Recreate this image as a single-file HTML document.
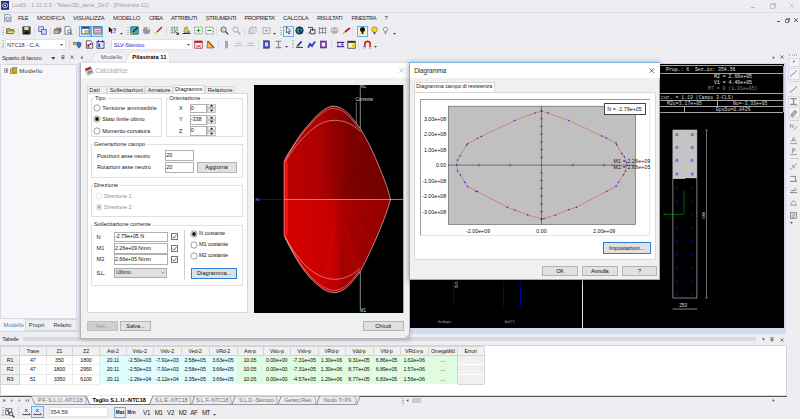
<!DOCTYPE html>
<html lang="it"><head><meta charset="utf-8"><title>Ludi3</title>
<style>
html,body{margin:0;padding:0}
body{width:800px;height:419px;overflow:hidden;background:#eeeef2;position:relative;font-family:"Liberation Sans",sans-serif}
.b{position:absolute;box-sizing:border-box;display:block}
.t{position:absolute;white-space:pre;font-family:"Liberation Sans",sans-serif}
.t.m{font-family:"Liberation Mono",monospace}
</style></head>
<body>
<div class="b" style="left:0.00px;top:0.00px;width:800.00px;height:12.30px;background:#eeeef2;"></div>
<div class="b" style="left:0.00px;top:12.20px;width:800.00px;height:0.80px;background:#dddde8;"></div>
<svg class="b" style="left:1px;top:1.2px" width="8.2" height="8.8" viewBox="0 0 9 10"><rect width="9" height="10" fill="#1b2a78"/><circle cx="4.5" cy="5" r="2.8" fill="none" stroke="#e8e8f4" stroke-width="1"/><circle cx="4.5" cy="5" r="1" fill="#e8e8f4"/></svg>
<span class="t" style="left:12.00px;top:2.21px;font-size:5.9px;line-height:6.79px;color:#a2a2a6;letter-spacing:-0.072px;">Ludi3 - 1.12.0.3 - Telaio3D_lame_DirZ - [Pilastrata 11]</span>
<div class="b" style="left:751.00px;top:7.00px;width:4.00px;height:0.60px;background:#b8b8bc;"></div>
<svg class="b" style="left:770px;top:3px" width="6" height="6" viewBox="0 0 6 6"><path d="M1.5 0.5H5.5V4.5M0.5 1.5H4.5V5.5H0.5Z" fill="none" stroke="#b0b0b4" stroke-width="0.7"/></svg>
<svg class="b" style="left:789px;top:3px" width="5" height="5" viewBox="0 0 5 5"><path d="M0.3 0.3L4.7 4.7M4.7 0.3L0.3 4.7" stroke="#b0b0b4" stroke-width="0.7"/></svg>
<svg class="b" style="left:4.2px;top:14px" width="7.6" height="8.3" viewBox="0 0 8 9.5"><path d="M0.5 0.5H5.5L7.5 2.5V9H0.5Z" fill="#fff" stroke="#444" stroke-width="0.7"/><circle cx="4" cy="5.5" r="2" fill="none" stroke="#3a4aa8" stroke-width="0.9"/></svg>
<span class="t" style="left:18.00px;top:15.27px;font-size:5.8px;line-height:6.67px;color:#2a2a2e;letter-spacing:-0.562px;">FILE</span>
<span class="t" style="left:37.00px;top:15.27px;font-size:5.8px;line-height:6.67px;color:#2a2a2e;letter-spacing:-0.044px;">MODIFICA</span>
<span class="t" style="left:73.00px;top:15.27px;font-size:5.8px;line-height:6.67px;color:#2a2a2e;letter-spacing:-0.170px;">VISUALIZZA</span>
<span class="t" style="left:113.00px;top:15.27px;font-size:5.8px;line-height:6.67px;color:#2a2a2e;letter-spacing:-0.195px;">MODELLO</span>
<span class="t" style="left:149.00px;top:15.27px;font-size:5.8px;line-height:6.67px;color:#2a2a2e;letter-spacing:-0.654px;">CREA</span>
<span class="t" style="left:171.00px;top:15.27px;font-size:5.8px;line-height:6.67px;color:#2a2a2e;letter-spacing:-0.393px;">ATTRIBUTI</span>
<span class="t" style="left:205.80px;top:15.27px;font-size:5.8px;line-height:6.67px;color:#2a2a2e;letter-spacing:-0.404px;">STRUMENTI</span>
<span class="t" style="left:244.50px;top:15.27px;font-size:5.8px;line-height:6.67px;color:#2a2a2e;letter-spacing:-0.370px;">PROPRIETA'</span>
<span class="t" style="left:283.00px;top:15.27px;font-size:5.8px;line-height:6.67px;color:#2a2a2e;letter-spacing:-0.225px;">CALCOLA</span>
<span class="t" style="left:317.00px;top:15.27px;font-size:5.8px;line-height:6.67px;color:#2a2a2e;letter-spacing:-0.340px;">RISULTATI</span>
<span class="t" style="left:351.50px;top:15.27px;font-size:5.8px;line-height:6.67px;color:#2a2a2e;letter-spacing:-0.523px;">FINESTRA</span>
<span class="t" style="left:384.50px;top:15.27px;font-size:5.8px;line-height:6.67px;color:#2a2a2e;">?</span>
<div class="b" style="left:776.50px;top:21.00px;width:3.00px;height:0.80px;background:#555;"></div>
<svg class="b" style="left:785px;top:17.5px" width="5" height="5" viewBox="0 0 5 5"><path d="M1.5 0.5H4.5V3.5M0.5 1.5H3.5V4.5H0.5Z" fill="none" stroke="#444" stroke-width="0.7"/></svg>
<svg class="b" style="left:794px;top:17.8px" width="4.4" height="4.4" viewBox="0 0 5 5"><path d="M0.3 0.3L4.7 4.7M4.7 0.3L0.3 4.7" stroke="#333" stroke-width="0.9"/></svg>
<div class="b" style="left:1.5px;top:27px;width:2px;height:9px;background:repeating-linear-gradient(#b8b8c2 0 0.8px,transparent 0.8px 1.7px)"></div>
<svg class="b" style="left:5.5px;top:26.4px" width="9" height="9" viewBox="0 0 9 9"><path d="M0.5 2.5H3.5L4 3.5H7.5V7.5H0.5Z" fill="#c8b63a" stroke="#4a4210" stroke-width="0.6"/><path d="M1.8 5H8.6L7.4 7.6H0.6Z" fill="#f0e27a" stroke="#4a4210" stroke-width="0.5"/></svg>
<svg class="b" style="left:21.5px;top:26.4px" width="9" height="9" viewBox="0 0 9 9"><rect x="0.8" y="0.8" width="7.4" height="7.4" fill="#3e3e10" stroke="#222" stroke-width="0.5"/><rect x="2.2" y="1" width="4.4" height="3" fill="#d8d8d0"/><rect x="2.6" y="5.6" width="3.6" height="2.4" fill="#111"/></svg>
<svg class="b" style="left:37.5px;top:26.4px" width="9" height="9" viewBox="0 0 9 9"><rect x="0.8" y="0.8" width="4.6" height="4.8" fill="#dfe6ff" stroke="#3246a0" stroke-width="0.7"/><rect x="3.6" y="3.4" width="4.6" height="4.8" fill="#c8d4ff" stroke="#3246a0" stroke-width="0.7"/></svg>
<svg class="b" style="left:52.5px;top:26.4px" width="9" height="9" viewBox="0 0 9 9"><path d="M1 4L3.5 2H8L6 4Z" fill="#ddd" stroke="#333" stroke-width="0.5"/><rect x="1" y="4" width="5.2" height="3.4" fill="#bbb" stroke="#333" stroke-width="0.5"/><path d="M6.2 4L8 2V5.4L6.2 7.4Z" fill="#888" stroke="#333" stroke-width="0.5"/><rect x="3" y="2.6" width="3" height="1" fill="#d33"/></svg>
<svg class="b" style="left:63.5px;top:26.4px" width="9" height="9" viewBox="0 0 9 9"><path d="M1 0.6H5.2L7 2.4V8.2H1Z" fill="#fff" stroke="#333" stroke-width="0.6"/><circle cx="5" cy="5.4" r="1.7" fill="#cfe" stroke="#245" stroke-width="0.6"/><path d="M6.2 6.6L8.2 8.6" stroke="#245" stroke-width="0.9"/></svg>
<div class="b" style="left:17.75px;top:26.50px;width:0.50px;height:9.50px;background:#dadae2;"></div>
<div class="b" style="left:33.75px;top:26.50px;width:0.50px;height:9.50px;background:#dadae2;"></div>
<div class="b" style="left:49.75px;top:26.50px;width:0.50px;height:9.50px;background:#dadae2;"></div>
<div class="b" style="left:75.75px;top:26.50px;width:0.50px;height:9.50px;background:#dadae2;"></div>
<div class="b" style="left:79.20px;top:25.80px;width:11.80px;height:11.00px;background:#d8ecfa;border:0.6px solid #6ab0e0;"></div>
<div class="b" style="left:91.20px;top:25.80px;width:11.80px;height:11.00px;background:#d8ecfa;border:0.6px solid #6ab0e0;"></div>
<svg class="b" style="left:80.5px;top:26.4px" width="9" height="9" viewBox="0 0 9 9"><rect x="0.8" y="1" width="7.4" height="7" fill="#fff" stroke="#234" stroke-width="0.7"/><rect x="0.8" y="1" width="7.4" height="1.8" fill="#234a8a"/><rect x="4" y="4.4" width="3.4" height="3" fill="#e8d44a" stroke="#553" stroke-width="0.4"/></svg>
<svg class="b" style="left:92.5px;top:26.4px" width="9" height="9" viewBox="0 0 9 9"><rect x="0.8" y="1" width="7.4" height="7" fill="#e8ecf8" stroke="#234" stroke-width="0.7"/><rect x="0.8" y="1" width="7.4" height="1.8" fill="#7a8ab8"/><path d="M1.6 4.4H7.4M1.6 6.2H7.4" stroke="#c33" stroke-width="0.7"/></svg>
<svg class="b" style="left:108.0px;top:26.4px" width="9" height="9" viewBox="0 0 9 9"><path d="M0.8 0.8V6.4L2.4 5L3.6 7.6L4.6 7.1L3.4 4.6H5.2Z" fill="#111"/><text x="4.6" y="6.6" font-size="6.5" font-weight="700" fill="#223a9a" font-family="Liberation Sans,sans-serif">?</text></svg>
<svg class="b" style="left:119.5px;top:33.2px" width="3" height="2" viewBox="0 0 3 2"><path d="M0 0H3L1.5 1.8Z" fill="#444"/></svg>
<div class="b" style="left:126.5px;top:27px;width:2px;height:9px;background:repeating-linear-gradient(#b8b8c2 0 0.8px,transparent 0.8px 1.7px)"></div>
<svg class="b" style="left:130.0px;top:26.4px" width="9" height="9" viewBox="0 0 9 9"><rect x="0.8" y="0.8" width="7.4" height="7.4" fill="#2ab8b0" stroke="#145" stroke-width="0.6"/><path d="M1.4 7.6L7.8 1.2" stroke="#223" stroke-width="1.3"/><path d="M1.2 7.8L2.8 6.2" stroke="#e6c020" stroke-width="1.2"/></svg>
<svg class="b" style="left:142.0px;top:26.4px" width="9" height="9" viewBox="0 0 9 9"><circle cx="4.5" cy="4.7" r="3.6" fill="#9a9a9a"/><path d="M5 1.4L8 2.6L5.6 4Z" fill="#eeeef2"/></svg>
<svg class="b" style="left:153.5px;top:26.4px" width="9" height="9" viewBox="0 0 9 9"><path d="M1 8L3 6" stroke="#e8d020" stroke-width="1.5"/><path d="M3 6L8 1" stroke="#c02020" stroke-width="1.4"/></svg>
<div class="b" style="left:165.75px;top:26.50px;width:0.50px;height:9.50px;background:#dadae2;"></div>
<svg class="b" style="left:169.5px;top:26.4px" width="9" height="9" viewBox="0 0 9 9"><path d="M0.8 1.6H8.2M0.8 4H8.2M0.8 6.4H6M2.2 0.6V7.6M4.6 0.6V7.6M7 0.6V5" stroke="#253" stroke-width="0.6" stroke-dasharray="1 0.6"/><path d="M5.4 5.4L8.4 8.4M8.4 6.4V8.4H6.4" stroke="#111" stroke-width="0.8" fill="none"/></svg>
<svg class="b" style="left:182.0px;top:26.4px" width="9" height="9" viewBox="0 0 9 9"><rect x="0.6" y="7" width="7.8" height="1" fill="#222"/><path d="M3.2 1.2H5.4V3.4L7.4 5L6 6.8H2.8L1.8 5Z" fill="#e2cc3a" stroke="#554" stroke-width="0.5"/><circle cx="6.6" cy="6.2" r="1.3" fill="#5a8"/></svg>
<svg class="b" style="left:193.5px;top:26.4px" width="9" height="9" viewBox="0 0 9 9"><rect x="0.8" y="1.2" width="7.4" height="6.6" fill="#fff" stroke="#333" stroke-width="0.6" stroke-dasharray="1 0.6"/><path d="M2.4 4.5H6.6M4.5 2.6V6.4" stroke="#1a9a2a" stroke-width="1.2"/></svg>
<svg class="b" style="left:205.0px;top:26.4px" width="9" height="9" viewBox="0 0 9 9"><rect x="0.8" y="1.2" width="7.4" height="6.6" fill="#fff" stroke="#333" stroke-width="0.6" stroke-dasharray="1 0.6"/><path d="M2.4 4.5H6.6" stroke="#1a9a2a" stroke-width="1.2"/></svg>
<div class="b" style="left:216.25px;top:26.50px;width:0.50px;height:9.50px;background:#dadae2;"></div>
<svg class="b" style="left:220.0px;top:26.4px" width="9" height="9" viewBox="0 0 9 9"><circle cx="3.6" cy="3.6" r="2.6" fill="#e8f4ee" stroke="#333" stroke-width="0.8"/><path d="M5.6 5.6L8.4 8.4" stroke="#333" stroke-width="1.2"/><path d="M2.4 3.6H4.8" stroke="#c80" stroke-width="0.7"/></svg>
<svg class="b" style="left:232.0px;top:26.4px" width="9" height="9" viewBox="0 0 9 9"><circle cx="3.6" cy="3.6" r="2.6" fill="none" stroke="#999" stroke-width="0.8"/><path d="M5.6 5.6L8.4 8.4" stroke="#999" stroke-width="1.1"/></svg>
<div class="b" style="left:244.25px;top:26.50px;width:0.50px;height:9.50px;background:#dadae2;"></div>
<svg class="b" style="left:248.0px;top:26.4px" width="9" height="9" viewBox="0 0 9 9"><path d="M1 3L3 1.2H8V5.6L6 7.6H1Z" fill="none" stroke="#a0a0a4" stroke-width="0.8"/><circle cx="4" cy="4.6" r="1.8" fill="none" stroke="#a0a0a4" stroke-width="0.7"/></svg>
<svg class="b" style="left:261.5px;top:26.4px" width="9" height="9" viewBox="0 0 9 9"><rect x="1" y="1.8" width="7" height="5.6" fill="none" stroke="#a0a0a4" stroke-width="0.8"/><circle cx="4.5" cy="4.6" r="1.2" fill="#a0a0a4"/></svg>
<svg class="b" style="left:273.0px;top:33.2px" width="3" height="2" viewBox="0 0 3 2"><path d="M0 0H3L1.5 1.8Z" fill="#444"/></svg>
<div class="b" style="left:279.5px;top:27px;width:2px;height:9px;background:repeating-linear-gradient(#b8b8c2 0 0.8px,transparent 0.8px 1.7px)"></div>
<div class="b" style="left:282.80px;top:25.80px;width:10.80px;height:11.00px;background:#e4f0fa;border:0.6px solid #6ab0e0;"></div>
<svg class="b" style="left:283.8px;top:26.4px" width="9" height="9" viewBox="0 0 9 9"><path d="M2.4 0.8V7L3.8 5.6L4.8 8L5.8 7.6L4.8 5.2H6.6Z" fill="#fff" stroke="#111" stroke-width="0.6"/></svg>
<svg class="b" style="left:295.0px;top:26.4px" width="9" height="9" viewBox="0 0 9 9"><circle cx="4.5" cy="4.5" r="3.8" fill="#1a3a9a" stroke="#112" stroke-width="0.5"/><path d="M2 2.6C3.4 1.4 4.6 2.6 4 4C3.4 5.4 4.6 6 3.8 7.4C2.4 7 1.2 5 2 2.6Z" fill="#2aa83a"/><path d="M5.6 2.2L7.4 3.4L6.8 5.6L5.6 4.6Z" fill="#2aa83a"/></svg>
<svg class="b" style="left:306.5px;top:26.4px" width="9" height="9" viewBox="0 0 9 9"><path d="M1 1.4H5.6V5M3.4 3.6H8V7.8H3.4Z" fill="none" stroke="#334" stroke-width="0.9"/><path d="M1.2 7.6L3.4 5.2" stroke="#334" stroke-width="0.8"/></svg>
<svg class="b" style="left:318.2px;top:26.4px" width="9" height="9" viewBox="0 0 9 9"><path d="M1.4 1V8M4.5 1V8M7.6 1V8M0.8 2.4H8.2M0.8 6.6H8.2" stroke="#777" stroke-width="0.8"/></svg>
<svg class="b" style="left:330.0px;top:26.4px" width="9" height="9" viewBox="0 0 9 9"><ellipse cx="4.5" cy="4.5" rx="3.8" ry="3.2" fill="#b0b0b2"/><circle cx="3" cy="4" r="0.9" fill="#eee"/><circle cx="6" cy="4" r="0.9" fill="#eee"/></svg>
<svg class="b" style="left:342.0px;top:26.4px" width="9" height="9" viewBox="0 0 9 9"><path d="M1 7.6L3 6" stroke="#d8c030" stroke-width="1.5"/><path d="M3 6L8 1.8" stroke="#b81818" stroke-width="1.7"/></svg>
<div class="b" style="left:352.25px;top:26.50px;width:0.50px;height:9.50px;background:#dadae2;"></div>
<div class="b" style="left:356.60px;top:25.80px;width:11.00px;height:11.00px;background:#f4f0c8;border:0.6px solid #6ab0e0;"></div>
<svg class="b" style="left:357.5px;top:26.4px" width="9" height="9" viewBox="0 0 9 9"><circle cx="4.5" cy="3.4" r="2.5" fill="#111"/><rect x="3.6" y="5.4" width="1.8" height="2.6" fill="#222"/></svg>
<svg class="b" style="left:369.5px;top:26.4px" width="9" height="9" viewBox="0 0 9 9"><circle cx="4.5" cy="3.6" r="2.8" fill="#f2e020" stroke="#554" stroke-width="0.5"/><rect x="3.6" y="6" width="1.8" height="2.2" fill="#555"/></svg>
<svg class="b" style="left:381.0px;top:26.4px" width="9" height="9" viewBox="0 0 9 9"><circle cx="4.5" cy="3.4" r="2.2" fill="#f4f4f4" stroke="#777" stroke-width="0.7"/><rect x="3.7" y="5.6" width="1.6" height="2.4" fill="#888"/></svg>
<svg class="b" style="left:392.5px;top:33.2px" width="3" height="2" viewBox="0 0 3 2"><path d="M0 0H3L1.5 1.8Z" fill="#444"/></svg>
<div class="b" style="left:1.5px;top:40px;width:2px;height:9px;background:repeating-linear-gradient(#b8b8c2 0 0.8px,transparent 0.8px 1.7px)"></div>
<div class="b" style="left:5.00px;top:39.30px;width:60.50px;height:10.40px;background:#fff;border:0.5px solid #e0e0e6;"></div>
<span class="t" style="left:7.00px;top:41.68px;font-size:5.6px;line-height:6.44px;color:#333;letter-spacing:-0.009px;">NTC18 - C.A.</span>
<svg class="b" style="left:59.8px;top:43.8px" width="3" height="2" viewBox="0 0 3 2"><path d="M0 0H3L1.5 1.8Z" fill="#444"/></svg>
<div class="b" style="left:69.25px;top:39.50px;width:0.50px;height:10.00px;background:#dadae2;"></div>
<svg class="b" style="left:73.0px;top:39.8px" width="9" height="9" viewBox="0 0 9 9"><rect x="0.6" y="2.4" width="5" height="2.2" fill="#d8c020" stroke="#443" stroke-width="0.5"/><path d="M5 2L8 3L7.6 6.4L5.6 8L4.2 5.6Z" fill="#2a7ad8" stroke="#124" stroke-width="0.5"/></svg>
<svg class="b" style="left:84.5px;top:39.8px" width="9" height="9" viewBox="0 0 9 9"><path d="M1.4 0.8H5.6L7.6 2.6V8.2H1.4Z" fill="#fff" stroke="#222" stroke-width="0.7"/><rect x="2.4" y="4" width="2.2" height="3.4" fill="#c22"/><rect x="5" y="3" width="1.6" height="2" fill="#24a"/></svg>
<svg class="b" style="left:95.5px;top:39.8px" width="9" height="9" viewBox="0 0 9 9"><rect x="1" y="1.4" width="7" height="6.8" fill="#dfe8ff" stroke="#124" stroke-width="0.7"/><rect x="2" y="0.4" width="1" height="2" fill="#124"/><rect x="6" y="0.4" width="1" height="2" fill="#124"/><rect x="2.2" y="3.6" width="2" height="3.6" fill="#2a58c8"/></svg>
<div class="b" style="left:110.80px;top:39.30px;width:82.20px;height:10.40px;background:#fff;border:0.5px solid #e0e0e6;"></div>
<span class="t" style="left:113.80px;top:41.68px;font-size:5.6px;line-height:6.44px;color:#2222c8;letter-spacing:-0.075px;">SLV-Sismico</span>
<svg class="b" style="left:187.3px;top:43.8px" width="3" height="2" viewBox="0 0 3 2"><path d="M0 0H3L1.5 1.8Z" fill="#444"/></svg>
<svg class="b" style="left:194.0px;top:39.8px" width="9" height="9" viewBox="0 0 9 9"><rect x="0.8" y="1" width="7.4" height="7.2" fill="#fff" stroke="#822" stroke-width="0.7"/><rect x="0.8" y="1" width="7.4" height="2" fill="#c22"/><path d="M2 5L7 7.4M7 5L2 7.4" stroke="#c22" stroke-width="0.7"/></svg>
<svg class="b" style="left:205.5px;top:39.8px" width="9" height="9" viewBox="0 0 9 9"><path d="M1 8L1.6 1L7.6 8Z" fill="#e8c828" stroke="#432" stroke-width="0.5"/><path d="M2 1L8 7.6" stroke="#b22" stroke-width="1.1"/></svg>
<div class="b" style="left:217.75px;top:39.50px;width:0.50px;height:10.00px;background:#dadae2;"></div>
<svg class="b" style="left:222.0px;top:39.8px" width="9" height="9" viewBox="0 0 9 9"><rect x="3" y="0.8" width="3" height="7.6" fill="#a8a8aa"/></svg>
<svg class="b" style="left:234.0px;top:39.8px" width="9" height="9" viewBox="0 0 9 9"><path d="M0.8 5.6H8.2M1.6 3.4H6.6" stroke="#b4b4b8" stroke-width="0.8"/><path d="M5.4 1.8L7.4 3.4" stroke="#b4b4b8" stroke-width="0.7"/></svg>
<svg class="b" style="left:246.0px;top:39.8px" width="9" height="9" viewBox="0 0 9 9"><path d="M0.8 5.6H8.2M1.6 3.4H6.6" stroke="#b4b4b8" stroke-width="0.8"/><path d="M5.4 1.8L7.4 3.4" stroke="#b4b4b8" stroke-width="0.7"/></svg>
<div class="b" style="left:257.75px;top:39.50px;width:0.50px;height:10.00px;background:#dadae2;"></div>
<svg class="b" style="left:261.5px;top:39.8px" width="9" height="9" viewBox="0 0 9 9"><rect x="1.6" y="0.8" width="5.8" height="7.4" fill="#3a48b8" stroke="#223" stroke-width="0.5"/><rect x="3" y="2.4" width="3" height="4" fill="#d8d8f8"/></svg>
<svg class="b" style="left:274.0px;top:39.8px" width="9" height="9" viewBox="0 0 9 9"><path d="M1.6 1.4H7.4M4.5 1.4V7.6M1.6 7.6H7.4" stroke="#8a8a8e" stroke-width="1.1"/></svg>
<svg class="b" style="left:285.0px;top:46.2px" width="3" height="2" viewBox="0 0 3 2"><path d="M0 0H3L1.5 1.8Z" fill="#444"/></svg>
<div class="b" style="left:291.5px;top:40px;width:2px;height:9px;background:repeating-linear-gradient(#b8b8c2 0 0.8px,transparent 0.8px 1.7px)"></div>
<svg class="b" style="left:295.0px;top:39.8px" width="9" height="9" viewBox="0 0 9 9"><path d="M1 7.4H8" stroke="#222" stroke-width="0.9"/><path d="M2 6.6L6.6 1.4" stroke="#2a3ab8" stroke-width="1.8"/><path d="M1.4 7.2L2.8 5.6" stroke="#d8b020" stroke-width="1.3"/></svg>
<svg class="b" style="left:306.5px;top:39.8px" width="9" height="9" viewBox="0 0 9 9"><path d="M1 7.6L3 4L5 6L8 1.4" stroke="#2a3ac8" stroke-width="1.8" fill="none"/></svg>
<svg class="b" style="left:318.5px;top:39.8px" width="9" height="9" viewBox="0 0 9 9"><rect x="1.4" y="1" width="6.2" height="7" fill="#8a3ac8" stroke="#324" stroke-width="0.5"/><rect x="2.8" y="2.6" width="3.4" height="3.8" fill="#f4eaff"/></svg>
<div class="b" style="left:331.25px;top:39.50px;width:0.50px;height:10.00px;background:#dadae2;"></div>
<svg class="b" style="left:335.5px;top:39.8px" width="9" height="9" viewBox="0 0 9 9"><path d="M0.8 2.4H8.2M0.8 6.6H8.2" stroke="#2838c8" stroke-width="1.1"/><path d="M2 2.4V6.6" stroke="#c22" stroke-width="1"/><rect x="5.4" y="3.4" width="2" height="2.2" fill="#c22"/></svg>
<svg class="b" style="left:347.0px;top:39.8px" width="9" height="9" viewBox="0 0 9 9"><rect x="0.8" y="1.2" width="7.4" height="7" fill="#f8f4d0" stroke="#222" stroke-width="0.7"/><rect x="0.8" y="1.2" width="7.4" height="1.6" fill="#222"/><rect x="5" y="4" width="2.6" height="3.2" fill="#e8d020"/></svg>
<div class="b" style="left:358.25px;top:39.50px;width:0.50px;height:10.00px;background:#dadae2;"></div>
<svg class="b" style="left:362.5px;top:39.8px" width="9" height="9" viewBox="0 0 9 9"><path d="M1.8 7.8V4C1.8 0.4 7.2 0.4 7.2 4V7.8" fill="none" stroke="#d82020" stroke-width="1.7"/><rect x="0.9" y="6.6" width="1.9" height="1.6" fill="#eee" stroke="#555" stroke-width="0.3"/><rect x="6.2" y="6.6" width="1.9" height="1.6" fill="#eee" stroke="#555" stroke-width="0.3"/></svg>
<svg class="b" style="left:374.0px;top:46.2px" width="3" height="2" viewBox="0 0 3 2"><path d="M0 0H3L1.5 1.8Z" fill="#444"/></svg>
<span class="t" style="left:1.90px;top:53.99px;font-size:6.1px;line-height:7.01px;color:#3a3a3e;letter-spacing:-0.232px;">Spazio di lavoro</span>
<svg class="b" style="left:50.60px;top:55.60px" width="4.4" height="4.4" viewBox="0 0 3 3"><path d="M0 0.6H3L1.5 2.6Z" fill="#444"/></svg>
<svg class="b" style="left:60.50px;top:54.80px" width="4" height="5" viewBox="0 0 4 5"><path d="M1 0.4H3V2.8H1ZM0.3 2.9H3.7M2 2.9V4.9" fill="none" stroke="#444" stroke-width="0.6"/></svg>
<svg class="b" style="left:69.90px;top:55.40px" width="4.2" height="4.2" viewBox="0 0 5 5"><path d="M0.4 0.4L4.6 4.6M4.6 0.4L0.4 4.6" stroke="#444" stroke-width="0.8"/></svg>
<div class="b" style="left:0.00px;top:64.00px;width:76.80px;height:255.40px;background:#f7f7fa;border:0.5px solid #dadae6;"></div>
<div class="b" style="left:3.60px;top:68.20px;width:4.80px;height:4.80px;background:#fff;border:0.5px solid #b0b0b8;"></div>
<div class="b" style="left:4.80px;top:70.35px;width:2.40px;height:0.50px;background:#777;"></div>
<div class="b" style="left:5.75px;top:69.40px;width:0.50px;height:2.40px;background:#777;"></div>
<svg class="b" style="left:9.6px;top:66.6px" width="7.6" height="7.6" viewBox="0 0 8 8"><rect x="0.6" y="2" width="4.6" height="5.4" fill="#e0c828" stroke="#554" stroke-width="0.5"/><rect x="3" y="0.8" width="4.4" height="5.6" fill="#c8a818" stroke="#554" stroke-width="0.5"/></svg>
<span class="t" style="left:19.30px;top:66.89px;font-size:6.1px;line-height:7.01px;color:#333;letter-spacing:0.305px;">Modello</span>
<div class="b" style="left:0.00px;top:319.00px;width:24.80px;height:12.00px;background:#f7f7fa;"></div>
<div class="b" style="left:24.80px;top:319.20px;width:52.00px;height:11.80px;background:#eeeef2;border:0.5px solid #d8d8e4;"></div>
<div class="b" style="left:0.00px;top:330.80px;width:77.50px;height:1.60px;background:#d0d4e6;"></div>
<span class="t" style="left:3.60px;top:322.18px;font-size:5.6px;line-height:6.44px;color:#3a78b8;letter-spacing:0.113px;">Modello</span>
<span class="t" style="left:28.80px;top:322.12px;font-size:5.7px;line-height:6.55px;color:#333;letter-spacing:0.049px;">Propri</span>
<span class="t" style="left:53.50px;top:322.12px;font-size:5.7px;line-height:6.55px;color:#333;letter-spacing:-0.187px;">Relazio</span>
<svg class="b" style="left:80.40px;top:55.70px" width="3.2" height="3.2" viewBox="0 0 3 3"><path d="M2.4 0L2.4 3L0.4 1.5Z" fill="#555"/></svg>
<svg class="b" style="left:88px;top:51px" width="90" height="12.5" viewBox="0 0 90 12.5"><path d="M1 12.5L8 1.5H36L41 12.5Z" fill="#f4f4f8" stroke="#d0d0da" stroke-width="0.5"/><path d="M36.5 12.5L43 1H81.5V12.5Z" fill="#fff" stroke="#d0d0da" stroke-width="0.5"/></svg>
<span class="t" style="left:101.00px;top:53.96px;font-size:5.8px;line-height:6.67px;color:#555;letter-spacing:0.170px;">Modello</span>
<span class="t" style="left:132.30px;top:53.96px;font-size:5.8px;line-height:6.67px;color:#000;font-weight:700;letter-spacing:0.026px;">Pilastrata 11</span>
<svg class="b" style="left:771.60px;top:55.60px" width="3.4" height="3.4" viewBox="0 0 3 3"><path d="M0.6 0L0.6 3L2.6 1.5Z" fill="#777"/></svg>
<svg class="b" style="left:779.50px;top:55.30px" width="4" height="4" viewBox="0 0 5 5"><path d="M0.4 0.4L4.6 4.6M4.6 0.4L0.4 4.6" stroke="#444" stroke-width="0.8"/></svg>
<div class="b" style="left:77.50px;top:62.80px;width:708.70px;height:271.20px;background:#d2dcf0;"></div>
<div class="b" style="left:77.50px;top:63.00px;width:2.70px;height:271.00px;background:#dde2f1;"></div>
<div class="b" style="left:80.00px;top:63.80px;width:704.20px;height:264.20px;background:#000;"></div>
<div class="b" style="left:582.00px;top:63.80px;width:1.40px;height:264.20px;background:#e8e8e8;"></div>
<div class="b" style="left:453.32px;top:281.00px;width:0.56px;height:26.00px;background:#00008c;"></div>
<div class="b" style="left:502.72px;top:281.00px;width:0.56px;height:26.00px;background:#00008c;"></div>
<div class="b" style="left:520.42px;top:281.00px;width:0.56px;height:26.00px;background:#00008c;"></div>
<span class="t" style="left:438.00px;top:320.50px;font-size:2.6px;line-height:2.99px;color:#aaa;">Hor Angolo</span>
<span class="t" style="left:505.00px;top:320.50px;font-size:2.6px;line-height:2.99px;color:#aaa;">A=0(Y?)</span>
<svg class="b" style="left:454px;top:281px" width="5" height="8" viewBox="0 0 5 8"><circle cx="2.4" cy="2" r="1.2" fill="none" stroke="#ddd" stroke-width="0.5"/><text x="0.4" y="7" font-size="2.8" fill="#ccc" font-family="Liberation Sans,sans-serif">M1</text></svg>
<div class="b" style="left:655.00px;top:65.45px;width:128.30px;height:0.70px;background:#a8a8a8;"></div>
<div class="b" style="left:655.00px;top:72.95px;width:128.30px;height:0.70px;background:#a8a8a8;"></div>
<div class="b" style="left:655.00px;top:92.65px;width:128.30px;height:0.70px;background:#a8a8a8;"></div>
<div class="b" style="left:655.00px;top:99.65px;width:128.30px;height:0.70px;background:#a8a8a8;"></div>
<div class="b" style="left:655.00px;top:106.15px;width:128.30px;height:0.70px;background:#a8a8a8;"></div>
<div class="b" style="left:655.00px;top:111.95px;width:128.30px;height:0.70px;background:#a8a8a8;"></div>
<div class="b" style="left:782.95px;top:65.80px;width:0.70px;height:46.50px;background:#a8a8a8;"></div>
<div class="b" style="left:717.15px;top:100.00px;width:0.70px;height:6.50px;background:#a8a8a8;"></div>
<div class="b" style="left:684.05px;top:106.50px;width:0.70px;height:5.80px;background:#a8a8a8;"></div>
<span class="t m" style="left:666.00px;top:66.84px;font-size:4.8px;line-height:5.52px;color:#e0e0e0;letter-spacing:0.015px;">Prop.: 6  Sez.in: 354.56</span>
<span class="t m" style="left:714.00px;top:74.34px;font-size:4.8px;line-height:5.52px;color:#e8e8e8;letter-spacing:0.043px;">M2 = 2.66e+05</span>
<span class="t m" style="left:714.00px;top:80.34px;font-size:4.8px;line-height:5.52px;color:#e8e8e8;letter-spacing:0.043px;">V1 = 4.46e+05</span>
<span class="t m" style="left:708.00px;top:86.34px;font-size:4.8px;line-height:5.52px;color:#8a8a8a;letter-spacing:0.031px;">MT = 0 (1.31e+05)</span>
<span class="t m" style="left:661.00px;top:94.64px;font-size:4.8px;line-height:5.52px;color:#d8d8d8;letter-spacing:0.020px;">cur. = 1.19 (Campo 3-CLS)</span>
<span class="t m" style="left:667.00px;top:100.54px;font-size:4.8px;line-height:5.52px;color:#d8d8d8;letter-spacing:0.036px;">M2u=3.17e+05</span>
<span class="t m" style="left:733.00px;top:100.54px;font-size:4.8px;line-height:5.52px;color:#d8d8d8;letter-spacing:-0.005px;">Nu=-3.33e+05</span>
<span class="t m" style="left:716.00px;top:106.74px;font-size:4.8px;line-height:5.52px;color:#d8d8d8;letter-spacing:-0.005px;">EpsSu=0.842%</span>
<svg class="b" style="left:655px;top:120px" width="125" height="200" viewBox="655 120 125 200"><rect x="672.9" y="130" width="24" height="168" fill="none" stroke="#d0d0d0" stroke-width="0.6"/><rect x="672.9" y="130" width="24" height="48.2" fill="#c4c4c4"/><path d="M672.9 178.3H685" stroke="#fff" stroke-width="0.8"/><circle cx="676.9" cy="134.7" r="1.3" fill="#8a8ae0" stroke="#4a4ad0" stroke-width="0.5"/><circle cx="692.2" cy="134.7" r="1.3" fill="#8a8ae0" stroke="#4a4ad0" stroke-width="0.5"/><circle cx="676.9" cy="147.5" r="1.3" fill="#8a8ae0" stroke="#4a4ad0" stroke-width="0.5"/><circle cx="692.2" cy="147.5" r="1.3" fill="#8a8ae0" stroke="#4a4ad0" stroke-width="0.5"/><circle cx="676.9" cy="160.4" r="1.3" fill="#8a8ae0" stroke="#4a4ad0" stroke-width="0.5"/><circle cx="692.2" cy="160.4" r="1.3" fill="#8a8ae0" stroke="#4a4ad0" stroke-width="0.5"/><circle cx="676.9" cy="174" r="1.3" fill="#8a8ae0" stroke="#4a4ad0" stroke-width="0.5"/><circle cx="692.2" cy="174" r="1.3" fill="#8a8ae0" stroke="#4a4ad0" stroke-width="0.5"/><circle cx="676.9" cy="188.6" r="1.1" fill="none" stroke="#0808b8" stroke-width="0.7"/><circle cx="692.2" cy="188.6" r="1.1" fill="none" stroke="#0808b8" stroke-width="0.7"/><circle cx="676.9" cy="201" r="1.1" fill="none" stroke="#0808b8" stroke-width="0.7"/><circle cx="692.2" cy="201" r="1.1" fill="none" stroke="#0808b8" stroke-width="0.7"/><circle cx="676.9" cy="214.3" r="1.1" fill="none" stroke="#0808b8" stroke-width="0.7"/><circle cx="692.2" cy="214.3" r="1.1" fill="none" stroke="#0808b8" stroke-width="0.7"/><circle cx="676.9" cy="228" r="1.1" fill="none" stroke="#0808b8" stroke-width="0.7"/><circle cx="692.2" cy="228" r="1.1" fill="none" stroke="#0808b8" stroke-width="0.7"/><circle cx="676.9" cy="241" r="1.1" fill="none" stroke="#0808b8" stroke-width="0.7"/><circle cx="692.2" cy="241" r="1.1" fill="none" stroke="#0808b8" stroke-width="0.7"/><circle cx="676.9" cy="255" r="1.1" fill="none" stroke="#0808b8" stroke-width="0.7"/><circle cx="692.2" cy="255" r="1.1" fill="none" stroke="#0808b8" stroke-width="0.7"/><circle cx="676.9" cy="268.4" r="1.1" fill="none" stroke="#0808b8" stroke-width="0.7"/><circle cx="692.2" cy="268.4" r="1.1" fill="none" stroke="#0808b8" stroke-width="0.7"/><circle cx="676.9" cy="281.6" r="1.1" fill="none" stroke="#0808b8" stroke-width="0.7"/><circle cx="692.2" cy="281.6" r="1.1" fill="none" stroke="#0808b8" stroke-width="0.7"/><circle cx="676.9" cy="294" r="1.1" fill="none" stroke="#0808b8" stroke-width="0.7"/><circle cx="692.2" cy="294" r="1.1" fill="none" stroke="#0808b8" stroke-width="0.7"/><path d="M663.6 214.3H684V191.6" fill="none" stroke="#00a000" stroke-width="0.6"/><path d="M682.6 193L684 191.2" stroke="#00a000" stroke-width="0.5"/><path d="M663.6 214.3L665.2 213.4M663.6 214.3L665.2 215.2" stroke="#00a000" stroke-width="0.4"/><path d="M706.5 130V298" stroke="#d8d8d8" stroke-width="0.5"/><path d="M705.3 130H707.7M705.3 298H707.7" stroke="#d8d8d8" stroke-width="0.5"/><text x="0" y="0" transform="translate(704.6 219) rotate(-90)" font-size="3.2" fill="#ccc" font-family="Liberation Sans,sans-serif">1000</text><text x="679.2" y="307" font-size="4.7" fill="#ddd" font-family="Liberation Sans,sans-serif">250</text><path d="M672.5 309H697.3" stroke="#d8d8d8" stroke-width="0.6"/></svg>
<div class="b" style="left:787.50px;top:51.00px;width:12.50px;height:284.00px;background:#eeeef2;"></div>
<div class="b" style="left:789px;top:53.5px;width:9px;height:2.0px;background:repeating-linear-gradient(90deg,#b8b8c2 0 0.8px,transparent 0.8px 1.7px)"></div>
<div class="b" style="left:788.30px;top:57.50px;width:11.70px;height:9.00px;background:#f4f4f8;border:0.5px solid #dcdce6;"></div>
<div class="b" style="left:788.30px;top:67.80px;width:11.70px;height:12.40px;background:#f4f4f8;border:0.5px solid #dcdce6;"></div>
<div class="b" style="left:788.30px;top:95.80px;width:11.70px;height:10.60px;background:#f4f4f8;border:0.5px solid #dcdce6;"></div>
<div class="b" style="left:788.30px;top:107.00px;width:11.70px;height:11.40px;background:#f4f4f8;border:0.5px solid #dcdce6;"></div>
<svg class="b" style="left:789px;top:56.8px" width="9" height="9" viewBox="0 0 9 9"><circle cx="4.8" cy="4.5" r="0.9" fill="#666"/></svg>
<svg class="b" style="left:789px;top:69.0px" width="9" height="9" viewBox="0 0 9 9"><path d="M1 7.6L8 1.4" stroke="#77777c" stroke-width="0.9"/></svg>
<div class="b" style="left:789.50px;top:81.30px;width:9.00px;height:0.60px;background:#d0d0da;"></div>
<svg class="b" style="left:789px;top:84.5px" width="9" height="9" viewBox="0 0 9 9"><path d="M1 7.6L8 1.4" stroke="#77777c" stroke-width="0.9"/></svg>
<svg class="b" style="left:789px;top:96.5px" width="9" height="9" viewBox="0 0 9 9"><path d="M1.2 1.6H7.8M1.2 7.4H7.8M4.5 1.6V7.4" stroke="#8e8e92" stroke-width="1.3"/></svg>
<svg class="b" style="left:789px;top:108.5px" width="9" height="9" viewBox="0 0 9 9"><path d="M1.4 6.4L5.6 1.2L8 3L3.8 8Z" fill="#b0b0b4" stroke="#77777c" stroke-width="0.6"/></svg>
<div class="b" style="left:789.50px;top:120.30px;width:9.00px;height:0.60px;background:#d0d0da;"></div>
<svg class="b" style="left:789px;top:123.0px" width="9" height="9" viewBox="0 0 9 9"><path d="M1.4 1.4V4.6M1.4 1.4L4 4.6V1.4M4.6 7.4L8 3.4" fill="none" stroke="#77777c" stroke-width="0.7"/></svg>
<svg class="b" style="left:789px;top:135.5px" width="9" height="9" viewBox="0 0 9 9"><path d="M1 7.6H8M2.4 5.8L4.5 1.6L6.6 5.8M3.2 4.4H5.8" fill="none" stroke="#77777c" stroke-width="0.7"/></svg>
<svg class="b" style="left:789px;top:147.0px" width="9" height="9" viewBox="0 0 9 9"><path d="M1 7.6H8M3.4 6V1.6H5.6V3.8H3.4" fill="none" stroke="#77777c" stroke-width="0.7"/></svg>
<div class="b" style="left:789.50px;top:158.30px;width:9.00px;height:0.60px;background:#d0d0da;"></div>
<svg class="b" style="left:789px;top:162.0px" width="9" height="9" viewBox="0 0 9 9"><path d="M1 7.6L8 1.4M3 2.4L6 6.4" stroke="#77777c" stroke-width="0.8"/></svg>
<svg class="b" style="left:789px;top:174.0px" width="9" height="9" viewBox="0 0 9 9"><path d="M1.4 2.4H6.4V7M1 7.4H8" fill="none" stroke="#77777c" stroke-width="0.9"/></svg>
<svg class="b" style="left:789px;top:186.0px" width="9" height="9" viewBox="0 0 9 9"><path d="M1 6.6H8M2 4.6H5.4C7.4 4.6 7.4 2.4 5.4 2.4" fill="none" stroke="#77777c" stroke-width="0.9"/></svg>
<svg class="b" style="left:789px;top:198.0px" width="9" height="9" viewBox="0 0 9 9"><path d="M1 7H8M2.4 5.4C2.4 2.4 6.6 2.4 6.6 5.4" fill="none" stroke="#77777c" stroke-width="0.8"/></svg>
<svg class="b" style="left:789px;top:210.5px" width="9" height="9" viewBox="0 0 9 9"><rect x="1.4" y="1.4" width="6.2" height="6.2" fill="#e4e4e8" stroke="#77777c" stroke-width="0.7"/><path d="M2.6 3.2H6.4M2.6 5H6.4M2.6 6.6H5" stroke="#77777c" stroke-width="0.6"/></svg>
<svg class="b" style="left:790.0px;top:221.5px" width="3" height="2" viewBox="0 0 3 2"><path d="M0 0H3L1.5 1.8Z" fill="#444"/></svg>
<span class="t" style="left:2.00px;top:336.35px;font-size:6.0px;line-height:6.90px;color:#3a3a3e;letter-spacing:-0.373px;">Tabelle</span>
<svg class="b" style="left:23px;top:337.4px" width="733" height="4" viewBox="0 0 733 4"><defs><pattern id="gp" width="1.7" height="4" patternUnits="userSpaceOnUse"><path d="M0 0L1.7 2L0 4M1.7 0L0 2L1.7 4" fill="none" stroke="#bcbcc8" stroke-width="0.4"/></pattern></defs><rect width="733" height="4" fill="url(#gp)"/></svg>
<svg class="b" style="left:761.50px;top:338.30px" width="3" height="3" viewBox="0 0 3 3"><path d="M0 0.6H3L1.5 2.6Z" fill="#444"/></svg>
<svg class="b" style="left:770.30px;top:337.00px" width="4" height="5" viewBox="0 0 4 5"><path d="M1 0.4H3V2.8H1ZM0.3 2.9H3.7M2 2.9V4.9" fill="none" stroke="#444" stroke-width="0.6"/></svg>
<svg class="b" style="left:780.30px;top:337.50px" width="4" height="4" viewBox="0 0 5 5"><path d="M0.4 0.4L4.6 4.6M4.6 0.4L0.4 4.6" stroke="#444" stroke-width="0.8"/></svg>
<div class="b" style="left:0.00px;top:345.40px;width:787.00px;height:50.60px;background:#fff;border:0.5px solid #d4d4de;"></div>
<div class="b" style="left:0.50px;top:346.50px;width:483.25px;height:8.60px;background:#f0f0f0;"></div>
<div class="b" style="left:0.50px;top:346.50px;width:19.00px;height:37.25px;background:#f0f0f0;"></div>
<div class="b" style="left:99.50px;top:355.10px;width:137.25px;height:28.65px;background:#e0fcfc;"></div>
<div class="b" style="left:236.75px;top:355.10px;width:220.75px;height:28.65px;background:#e0fce0;"></div>
<div class="b" style="left:457.50px;top:355.10px;width:26.25px;height:28.65px;background:#f0f0f0;"></div>
<div class="b" style="left:0.25px;top:346.50px;width:0.50px;height:37.25px;background:#d4d4d4;"></div>
<div class="b" style="left:19.25px;top:346.50px;width:0.50px;height:37.25px;background:#d4d4d4;"></div>
<div class="b" style="left:46.00px;top:346.50px;width:0.50px;height:8.60px;background:#d4d4d4;"></div>
<div class="b" style="left:46.00px;top:355.10px;width:0.50px;height:28.65px;background:#ececec;"></div>
<div class="b" style="left:72.25px;top:346.50px;width:0.50px;height:8.60px;background:#d4d4d4;"></div>
<div class="b" style="left:72.25px;top:355.10px;width:0.50px;height:28.65px;background:#ececec;"></div>
<div class="b" style="left:99.25px;top:346.50px;width:0.50px;height:8.60px;background:#d4d4d4;"></div>
<div class="b" style="left:99.25px;top:355.10px;width:0.50px;height:28.65px;background:#ececec;"></div>
<div class="b" style="left:126.00px;top:346.50px;width:0.50px;height:8.60px;background:#d4d4d4;"></div>
<div class="b" style="left:152.75px;top:346.50px;width:0.50px;height:8.60px;background:#d4d4d4;"></div>
<div class="b" style="left:181.00px;top:346.50px;width:0.50px;height:8.60px;background:#d4d4d4;"></div>
<div class="b" style="left:208.75px;top:346.50px;width:0.50px;height:8.60px;background:#d4d4d4;"></div>
<div class="b" style="left:236.50px;top:346.50px;width:0.50px;height:8.60px;background:#d4d4d4;"></div>
<div class="b" style="left:262.75px;top:346.50px;width:0.50px;height:8.60px;background:#d4d4d4;"></div>
<div class="b" style="left:290.25px;top:346.50px;width:0.50px;height:8.60px;background:#d4d4d4;"></div>
<div class="b" style="left:317.75px;top:346.50px;width:0.50px;height:8.60px;background:#d4d4d4;"></div>
<div class="b" style="left:344.75px;top:346.50px;width:0.50px;height:8.60px;background:#d4d4d4;"></div>
<div class="b" style="left:372.75px;top:346.50px;width:0.50px;height:8.60px;background:#d4d4d4;"></div>
<div class="b" style="left:399.75px;top:346.50px;width:0.50px;height:8.60px;background:#d4d4d4;"></div>
<div class="b" style="left:428.00px;top:346.50px;width:0.50px;height:8.60px;background:#d4d4d4;"></div>
<div class="b" style="left:457.25px;top:346.50px;width:0.50px;height:37.25px;background:#d4d4d4;"></div>
<div class="b" style="left:483.50px;top:346.50px;width:0.50px;height:37.25px;background:#d4d4d4;"></div>
<div class="b" style="left:0.50px;top:346.25px;width:483.25px;height:0.50px;background:#d4d4d4;"></div>
<div class="b" style="left:0.50px;top:354.85px;width:483.25px;height:0.50px;background:#d4d4d4;"></div>
<div class="b" style="left:0.50px;top:364.40px;width:19.00px;height:0.50px;background:#d4d4d4;"></div>
<div class="b" style="left:19.50px;top:364.40px;width:80.00px;height:0.50px;background:#ececec;"></div>
<div class="b" style="left:457.50px;top:364.35px;width:26.25px;height:0.60px;background:#fff;"></div>
<div class="b" style="left:0.50px;top:373.95px;width:19.00px;height:0.50px;background:#d4d4d4;"></div>
<div class="b" style="left:19.50px;top:373.95px;width:80.00px;height:0.50px;background:#ececec;"></div>
<div class="b" style="left:457.50px;top:373.90px;width:26.25px;height:0.60px;background:#fff;"></div>
<div class="b" style="left:0.50px;top:383.50px;width:19.00px;height:0.50px;background:#d4d4d4;"></div>
<div class="b" style="left:19.50px;top:383.50px;width:80.00px;height:0.50px;background:#ececec;"></div>
<div class="b" style="left:457.50px;top:383.50px;width:26.25px;height:0.50px;background:#d4d4d4;"></div>
<span class="t" style="left:26.58px;top:348.02px;font-size:5.35px;line-height:6.15px;color:#222;letter-spacing:-0.176px;">Trave</span>
<span class="t" style="left:56.46px;top:348.02px;font-size:5.35px;line-height:6.15px;color:#222;letter-spacing:-0.204px;">Z1</span>
<span class="t" style="left:83.08px;top:348.02px;font-size:5.35px;line-height:6.15px;color:#222;letter-spacing:-0.204px;">Z2</span>
<span class="t" style="left:107.04px;top:348.02px;font-size:5.35px;line-height:6.15px;color:#222;letter-spacing:-0.163px;">Ast-2</span>
<span class="t" style="left:132.54px;top:348.02px;font-size:5.35px;line-height:6.15px;color:#222;letter-spacing:-0.165px;">Vslu-2</span>
<span class="t" style="left:160.18px;top:348.02px;font-size:5.35px;line-height:6.15px;color:#222;letter-spacing:-0.162px;">Vslv-2</span>
<span class="t" style="left:188.59px;top:348.02px;font-size:5.35px;line-height:6.15px;color:#222;letter-spacing:-0.183px;">Ved-2</span>
<span class="t" style="left:215.79px;top:348.02px;font-size:5.35px;line-height:6.15px;color:#222;letter-spacing:-0.198px;">VRd-2</span>
<span class="t" style="left:244.04px;top:348.02px;font-size:5.35px;line-height:6.15px;color:#222;letter-spacing:-0.163px;">Ast-p</span>
<span class="t" style="left:269.66px;top:348.02px;font-size:5.35px;line-height:6.15px;color:#222;letter-spacing:-0.165px;">Vslu-p</span>
<span class="t" style="left:297.30px;top:348.02px;font-size:5.35px;line-height:6.15px;color:#222;letter-spacing:-0.162px;">Vslv-p</span>
<span class="t" style="left:324.41px;top:348.02px;font-size:5.35px;line-height:6.15px;color:#222;letter-spacing:-0.198px;">VRd-p</span>
<span class="t" style="left:352.33px;top:348.02px;font-size:5.35px;line-height:6.15px;color:#222;letter-spacing:-0.187px;">Vdd-p</span>
<span class="t" style="left:380.52px;top:348.02px;font-size:5.35px;line-height:6.15px;color:#222;letter-spacing:-0.167px;">Vfd-p</span>
<span class="t" style="left:405.09px;top:348.02px;font-size:5.35px;line-height:6.15px;color:#222;letter-spacing:-0.181px;">VRd.s-p</span>
<span class="t" style="left:430.93px;top:348.02px;font-size:5.35px;line-height:6.15px;color:#222;letter-spacing:-0.239px;">OmegaWd</span>
<span class="t" style="left:464.51px;top:348.02px;font-size:5.35px;line-height:6.15px;color:#222;letter-spacing:-0.143px;">Errori</span>
<span class="t" style="left:6.74px;top:356.90px;font-size:5.35px;line-height:6.15px;color:#111;letter-spacing:-0.160px;">R1</span>
<span class="t" style="left:30.04px;top:356.90px;font-size:5.35px;line-height:6.15px;color:#111;letter-spacing:-0.139px;">47</span>
<span class="t" style="left:55.12px;top:356.90px;font-size:5.35px;line-height:6.15px;color:#111;letter-spacing:-0.139px;">350</span>
<span class="t" style="left:80.33px;top:356.90px;font-size:5.35px;line-height:6.15px;color:#111;letter-spacing:-0.139px;">1800</span>
<span class="t" style="left:106.68px;top:356.90px;font-size:5.35px;line-height:6.15px;color:#111;letter-spacing:-0.121px;">20.11</span>
<span class="t" style="left:128.07px;top:356.90px;font-size:5.35px;line-height:6.15px;color:#111;letter-spacing:-0.126px;">-2.50e+03</span>
<span class="t" style="left:155.57px;top:356.90px;font-size:5.35px;line-height:6.15px;color:#111;letter-spacing:-0.126px;">-7.91e+03</span>
<span class="t" style="left:184.42px;top:356.90px;font-size:5.35px;line-height:6.15px;color:#111;letter-spacing:-0.131px;">2.58e+05</span>
<span class="t" style="left:212.17px;top:356.90px;font-size:5.35px;line-height:6.15px;color:#111;letter-spacing:-0.131px;">3.63e+05</span>
<span class="t" style="left:243.49px;top:356.90px;font-size:5.35px;line-height:6.15px;color:#111;letter-spacing:-0.125px;">10.05</span>
<span class="t" style="left:266.04px;top:356.90px;font-size:5.35px;line-height:6.15px;color:#111;letter-spacing:-0.131px;">0.00e+00</span>
<span class="t" style="left:292.69px;top:356.90px;font-size:5.35px;line-height:6.15px;color:#111;letter-spacing:-0.126px;">-7.31e+05</span>
<span class="t" style="left:320.79px;top:356.90px;font-size:5.35px;line-height:6.15px;color:#111;letter-spacing:-0.131px;">1.30e+06</span>
<span class="t" style="left:348.29px;top:356.90px;font-size:5.35px;line-height:6.15px;color:#111;letter-spacing:-0.131px;">9.31e+05</span>
<span class="t" style="left:375.79px;top:356.90px;font-size:5.35px;line-height:6.15px;color:#111;letter-spacing:-0.131px;">6.86e+05</span>
<span class="t" style="left:403.42px;top:356.90px;font-size:5.35px;line-height:6.15px;color:#111;letter-spacing:-0.131px;">1.62e+06</span>
<span class="t" style="left:440.04px;top:356.90px;font-size:5.35px;line-height:6.15px;color:#111;letter-spacing:-0.069px;">....</span>
<span class="t" style="left:6.74px;top:366.45px;font-size:5.35px;line-height:6.15px;color:#111;letter-spacing:-0.160px;">R2</span>
<span class="t" style="left:30.04px;top:366.45px;font-size:5.35px;line-height:6.15px;color:#111;letter-spacing:-0.139px;">47</span>
<span class="t" style="left:53.70px;top:366.45px;font-size:5.35px;line-height:6.15px;color:#111;letter-spacing:-0.139px;">1800</span>
<span class="t" style="left:80.33px;top:366.45px;font-size:5.35px;line-height:6.15px;color:#111;letter-spacing:-0.139px;">2950</span>
<span class="t" style="left:106.68px;top:366.45px;font-size:5.35px;line-height:6.15px;color:#111;letter-spacing:-0.121px;">20.11</span>
<span class="t" style="left:128.07px;top:366.45px;font-size:5.35px;line-height:6.15px;color:#111;letter-spacing:-0.126px;">-2.50e+03</span>
<span class="t" style="left:155.57px;top:366.45px;font-size:5.35px;line-height:6.15px;color:#111;letter-spacing:-0.126px;">-7.91e+03</span>
<span class="t" style="left:184.42px;top:366.45px;font-size:5.35px;line-height:6.15px;color:#111;letter-spacing:-0.131px;">2.58e+05</span>
<span class="t" style="left:212.17px;top:366.45px;font-size:5.35px;line-height:6.15px;color:#111;letter-spacing:-0.131px;">3.66e+05</span>
<span class="t" style="left:243.49px;top:366.45px;font-size:5.35px;line-height:6.15px;color:#111;letter-spacing:-0.125px;">10.05</span>
<span class="t" style="left:266.04px;top:366.45px;font-size:5.35px;line-height:6.15px;color:#111;letter-spacing:-0.131px;">0.00e+00</span>
<span class="t" style="left:292.69px;top:366.45px;font-size:5.35px;line-height:6.15px;color:#111;letter-spacing:-0.126px;">-7.31e+05</span>
<span class="t" style="left:320.79px;top:366.45px;font-size:5.35px;line-height:6.15px;color:#111;letter-spacing:-0.131px;">1.30e+06</span>
<span class="t" style="left:348.29px;top:366.45px;font-size:5.35px;line-height:6.15px;color:#111;letter-spacing:-0.131px;">8.77e+05</span>
<span class="t" style="left:375.79px;top:366.45px;font-size:5.35px;line-height:6.15px;color:#111;letter-spacing:-0.131px;">6.89e+05</span>
<span class="t" style="left:403.42px;top:366.45px;font-size:5.35px;line-height:6.15px;color:#111;letter-spacing:-0.131px;">1.57e+06</span>
<span class="t" style="left:440.04px;top:366.45px;font-size:5.35px;line-height:6.15px;color:#111;letter-spacing:-0.069px;">....</span>
<span class="t" style="left:6.74px;top:376.00px;font-size:5.35px;line-height:6.15px;color:#111;letter-spacing:-0.160px;">R3</span>
<span class="t" style="left:30.04px;top:376.00px;font-size:5.35px;line-height:6.15px;color:#111;letter-spacing:-0.139px;">51</span>
<span class="t" style="left:53.70px;top:376.00px;font-size:5.35px;line-height:6.15px;color:#111;letter-spacing:-0.139px;">3350</span>
<span class="t" style="left:80.33px;top:376.00px;font-size:5.35px;line-height:6.15px;color:#111;letter-spacing:-0.139px;">6100</span>
<span class="t" style="left:106.68px;top:376.00px;font-size:5.35px;line-height:6.15px;color:#111;letter-spacing:-0.121px;">20.11</span>
<span class="t" style="left:128.07px;top:376.00px;font-size:5.35px;line-height:6.15px;color:#111;letter-spacing:-0.126px;">-1.26e+04</span>
<span class="t" style="left:155.57px;top:376.00px;font-size:5.35px;line-height:6.15px;color:#111;letter-spacing:-0.126px;">-3.12e+04</span>
<span class="t" style="left:184.42px;top:376.00px;font-size:5.35px;line-height:6.15px;color:#111;letter-spacing:-0.131px;">2.35e+05</span>
<span class="t" style="left:212.17px;top:376.00px;font-size:5.35px;line-height:6.15px;color:#111;letter-spacing:-0.131px;">3.66e+05</span>
<span class="t" style="left:243.49px;top:376.00px;font-size:5.35px;line-height:6.15px;color:#111;letter-spacing:-0.125px;">10.05</span>
<span class="t" style="left:266.04px;top:376.00px;font-size:5.35px;line-height:6.15px;color:#111;letter-spacing:-0.131px;">0.00e+00</span>
<span class="t" style="left:292.69px;top:376.00px;font-size:5.35px;line-height:6.15px;color:#111;letter-spacing:-0.126px;">-4.57e+05</span>
<span class="t" style="left:320.79px;top:376.00px;font-size:5.35px;line-height:6.15px;color:#111;letter-spacing:-0.131px;">1.29e+06</span>
<span class="t" style="left:348.29px;top:376.00px;font-size:5.35px;line-height:6.15px;color:#111;letter-spacing:-0.131px;">8.77e+05</span>
<span class="t" style="left:375.79px;top:376.00px;font-size:5.35px;line-height:6.15px;color:#111;letter-spacing:-0.131px;">6.83e+05</span>
<span class="t" style="left:403.42px;top:376.00px;font-size:5.35px;line-height:6.15px;color:#111;letter-spacing:-0.131px;">1.56e+06</span>
<span class="t" style="left:440.04px;top:376.00px;font-size:5.35px;line-height:6.15px;color:#111;letter-spacing:-0.069px;">....</span>
<div class="b" style="left:0.00px;top:395.90px;width:86.30px;height:0.60px;background:#555;"></div>
<div class="b" style="left:152.80px;top:395.90px;width:634.20px;height:0.60px;background:#555;"></div>
<svg class="b" style="left:3.00px;top:399.00px" width="3" height="3" viewBox="0 0 3 3"><path d="M2.4 0L2.4 3L0.4 1.5Z" fill="#888"/></svg>
<svg class="b" style="left:10.00px;top:399.00px" width="3" height="3" viewBox="0 0 3 3"><path d="M2.4 0L2.4 3L0.4 1.5Z" fill="#888"/></svg>
<svg class="b" style="left:17.50px;top:399.00px" width="3" height="3" viewBox="0 0 3 3"><path d="M0.6 0L0.6 3L2.6 1.5Z" fill="#888"/></svg>
<svg class="b" style="left:25.00px;top:399.00px" width="3" height="3" viewBox="0 0 3 3"><path d="M0.6 0L0.6 3L2.6 1.5Z" fill="#888"/></svg>
<div class="b" style="left:2.60px;top:399.00px;width:0.60px;height:3.00px;background:#888;"></div>
<div class="b" style="left:27.80px;top:399.00px;width:0.60px;height:3.00px;background:#888;"></div>
<svg class="b" style="left:0;top:395px" width="400" height="11" viewBox="0 395 400 11"><path d="M31 396.2L35 404.5H357L360.5 396.2Z" fill="#ececf0"/><path d="M31 396.2L35 404.5H357" fill="none" stroke="#555" stroke-width="0.55"/><path d="M191.5 404.5L194.7 396.2" stroke="#444" stroke-width="0.55"/><path d="M189.1 396.2C190.9 397.7 191.1 402.5 189.9 404.5" fill="none" stroke="#666" stroke-width="0.45"/><path d="M232 404.5L235.2 396.2" stroke="#444" stroke-width="0.55"/><path d="M229.6 396.2C231.4 397.7 231.6 402.5 230.4 404.5" fill="none" stroke="#666" stroke-width="0.45"/><path d="M278 404.5L281.2 396.2" stroke="#444" stroke-width="0.55"/><path d="M275.6 396.2C277.4 397.7 277.6 402.5 276.4 404.5" fill="none" stroke="#666" stroke-width="0.45"/><path d="M316.5 404.5L319.7 396.2" stroke="#444" stroke-width="0.55"/><path d="M314.1 396.2C315.9 397.7 316.1 402.5 314.9 404.5" fill="none" stroke="#666" stroke-width="0.45"/><path d="M356.8 404.5L360.0 396.2" stroke="#444" stroke-width="0.55"/><path d="M354.40000000000003 396.2C356.2 397.7 356.40000000000003 402.5 355.2 404.5" fill="none" stroke="#666" stroke-width="0.45"/><path d="M84.6 396.2C86.6 397.7 86.8 402.5 85.4 404.5" fill="none" stroke="#666" stroke-width="0.45"/><path d="M86.3 395.59999999999997L89.8 404.5H149.5L152.8 395.59999999999997Z" fill="#fff"/><path d="M86.3 396.2L89.8 404.5H149.5L152.8 396.2" fill="none" stroke="#333" stroke-width="0.6"/></svg>
<span class="t" style="left:38.00px;top:397.18px;font-size:5.6px;line-height:6.44px;color:#707074;letter-spacing:-0.086px;">P.F.-S.L.U.-NTC18</span>
<span class="t" style="left:92.50px;top:397.18px;font-size:5.6px;line-height:6.44px;color:#000;font-weight:700;letter-spacing:0.021px;">Taglio S.L.U.-NTC18</span>
<span class="t" style="left:155.00px;top:397.18px;font-size:5.6px;line-height:6.44px;color:#707074;letter-spacing:-0.196px;">S.L.E.-NTC18</span>
<span class="t" style="left:196.00px;top:397.18px;font-size:5.6px;line-height:6.44px;color:#707074;letter-spacing:-0.118px;">S.L.F.-NTC18</span>
<span class="t" style="left:239.00px;top:397.18px;font-size:5.6px;line-height:6.44px;color:#707074;letter-spacing:-0.145px;">S.L.D.-Sismico</span>
<span class="t" style="left:284.00px;top:397.18px;font-size:5.6px;line-height:6.44px;color:#707074;letter-spacing:-0.153px;">Gerarc.Res.</span>
<span class="t" style="left:323.50px;top:397.18px;font-size:5.6px;line-height:6.44px;color:#707074;letter-spacing:0.004px;">Nodo Tr.Pil.</span>
<div class="b" style="left:401.5px;top:397.5px;width:2px;height:6.0px;background:repeating-linear-gradient(#b8b8c2 0 0.8px,transparent 0.8px 1.7px)"></div>
<svg class="b" style="left:406.00px;top:399.20px" width="3" height="3" viewBox="0 0 3 3"><path d="M2.4 0L2.4 3L0.4 1.5Z" fill="#555"/></svg>
<div class="b" style="left:412.00px;top:398.30px;width:8.50px;height:4.70px;background:#c8c8d6;"></div>
<svg class="b" style="left:772.00px;top:399.20px" width="3" height="3" viewBox="0 0 3 3"><path d="M0.6 0L0.6 3L2.6 1.5Z" fill="#555"/></svg>
<div class="b" style="left:1.5px;top:407px;width:2px;height:10px;background:repeating-linear-gradient(#b8b8c2 0 0.8px,transparent 0.8px 1.7px)"></div>
<svg class="b" style="left:4.5px;top:407.5px" width="10" height="10" viewBox="0 0 10 10"><rect x="0.8" y="0.8" width="6" height="6" fill="#fff" stroke="#334" stroke-width="0.7"/><rect x="1.6" y="1.6" width="2.4" height="2" fill="#c33"/><rect x="3" y="3.6" width="3" height="2.4" fill="#36b"/><circle cx="6" cy="6" r="1.8" fill="#cfe8e0" stroke="#223" stroke-width="0.6"/><path d="M7.4 7.4L9.4 9.4" stroke="#111" stroke-width="1.1"/></svg>
<div class="b" style="left:17.75px;top:407.00px;width:0.50px;height:10.00px;background:#dadae2;"></div>
<div class="b" style="left:31.00px;top:406.30px;width:12.50px;height:11.70px;background:#d8ecfa;border:0.6px solid #6ab0e0;"></div>
<svg class="b" style="left:22px;top:408px" width="9" height="8" viewBox="0 0 9 8"><path d="M0.4 6.6H8.6" stroke="#223" stroke-width="0.8"/><path d="M3 1L5.6 4M5.6 1L3 4" stroke="#3a3ad0" stroke-width="0.8"/><path d="M6.6 6.4L7.4 4.4L8 6.4Z" fill="#d22"/><path d="M1 6.4L1.6 5.2L2.2 6.4Z" fill="#d22"/></svg>
<svg class="b" style="left:33px;top:408px" width="9" height="8" viewBox="0 0 9 8"><path d="M0.4 6.6H8.6" stroke="#223" stroke-width="0.8"/><path d="M3 1L5.6 4M5.6 1L3 4" stroke="#3a3ad0" stroke-width="0.8"/><path d="M6.6 6.4L7.4 4.4L8 6.4Z" fill="#d22"/><path d="M1 6.4L1.6 5.2L2.2 6.4Z" fill="#d22"/></svg>
<div class="b" style="left:48.50px;top:406.80px;width:59.50px;height:10.70px;background:#fff;border:0.5px solid #e0e0e6;"></div>
<span class="t" style="left:50.30px;top:409.06px;font-size:5.8px;line-height:6.67px;color:#333;letter-spacing:-0.007px;">354.56</span>
<div class="b" style="left:114.30px;top:406.50px;width:11.30px;height:11.30px;background:#e4f0fa;border:0.6px solid #6ab0e0;"></div>
<span class="t" style="left:115.80px;top:409.96px;font-size:4.6px;line-height:5.29px;color:#223;font-weight:700;letter-spacing:-0.150px;">Max</span>
<span class="t" style="left:127.30px;top:409.96px;font-size:4.6px;line-height:5.29px;color:#223;font-weight:700;letter-spacing:0.193px;">Min</span>
<span class="t" style="left:143.00px;top:408.88px;font-size:6.3px;line-height:7.24px;color:#222;letter-spacing:-0.203px;">V1</span>
<span class="t" style="left:154.80px;top:408.88px;font-size:6.3px;line-height:7.24px;color:#222;letter-spacing:-0.626px;">M1</span>
<span class="t" style="left:167.00px;top:408.88px;font-size:6.3px;line-height:7.24px;color:#222;letter-spacing:-0.203px;">V2</span>
<span class="t" style="left:178.80px;top:408.88px;font-size:6.3px;line-height:7.24px;color:#222;letter-spacing:-0.626px;">M2</span>
<span class="t" style="left:190.30px;top:408.88px;font-size:6.3px;line-height:7.24px;color:#222;letter-spacing:-0.425px;">AF</span>
<span class="t" style="left:202.00px;top:408.88px;font-size:6.3px;line-height:7.24px;color:#222;letter-spacing:-0.748px;">MT</span>
<svg class="b" style="left:212.5px;top:414.3px" width="3" height="2" viewBox="0 0 3 2"><path d="M0 0H3L1.5 1.8Z" fill="#444"/></svg>
<div class="b" style="left:80.30px;top:62.50px;width:329.90px;height:276.00px;background:#f0f0f0;border:0.5px solid #b4b4bc;box-shadow:0 1px 4px rgba(0,0,0,0.22);"></div>
<div class="b" style="left:80.80px;top:63.00px;width:328.90px;height:15.30px;background:#fff;"></div>
<svg class="b" style="left:84px;top:66px" width="10" height="10" viewBox="0 0 10 10"><path d="M1 3L6.4 0.8L9.2 6.6L3.8 9.2Z" fill="#e8e8e8" stroke="#777" stroke-width="0.6"/><path d="M1 3L6.4 0.8L7.4 2.8L2 5Z" fill="#b02020"/><path d="M3.4 5.6L7.6 3.8L8.6 6.2L4.2 8Z" fill="#8a8a8a"/></svg>
<span class="t" style="left:95.30px;top:66.92px;font-size:6.4px;line-height:7.36px;color:#a8a8a8;letter-spacing:-0.103px;">Calcolatrice</span>
<svg class="b" style="left:399.00px;top:68.30px" width="5" height="5" viewBox="0 0 5 5"><path d="M0.4 0.4L4.6 4.6M4.6 0.4L0.4 4.6" stroke="#8a8a8a" stroke-width="0.55"/></svg>
<div class="b" style="left:87.00px;top:92.50px;width:160.70px;height:220.80px;background:#fff;border:0.5px solid #d8d8d8;"></div>
<div class="b" style="left:87.00px;top:86.00px;width:20.00px;height:6.70px;background:#f0f0f0;border:0.5px solid #d8d8d8;border-bottom:none;"></div>
<span class="t" style="left:89.30px;top:86.68px;font-size:5.6px;line-height:6.44px;color:#222;letter-spacing:0.135px;">Dati</span>
<div class="b" style="left:107.00px;top:86.00px;width:37.50px;height:6.70px;background:#f0f0f0;border:0.5px solid #d8d8d8;border-bottom:none;"></div>
<span class="t" style="left:109.80px;top:86.68px;font-size:5.6px;line-height:6.44px;color:#222;letter-spacing:0.037px;">Sollecitazioni</span>
<div class="b" style="left:144.50px;top:86.00px;width:28.00px;height:6.70px;background:#f0f0f0;border:0.5px solid #d8d8d8;border-bottom:none;"></div>
<span class="t" style="left:147.80px;top:86.68px;font-size:5.6px;line-height:6.44px;color:#222;letter-spacing:-0.066px;">Armature</span>
<div class="b" style="left:205.00px;top:86.00px;width:30.00px;height:6.70px;background:#f0f0f0;border:0.5px solid #d8d8d8;border-bottom:none;"></div>
<span class="t" style="left:207.80px;top:86.68px;font-size:5.6px;line-height:6.44px;color:#222;letter-spacing:-0.023px;">Relazione</span>
<div class="b" style="left:172.50px;top:84.80px;width:32.30px;height:8.50px;background:#fff;border:0.5px solid #d8d8d8;border-bottom:none;"></div>
<span class="t" style="left:175.00px;top:85.68px;font-size:5.6px;line-height:6.44px;color:#111;letter-spacing:0.048px;">Diagrammi</span>
<div class="b" style="left:90.50px;top:98.00px;width:71.50px;height:39.30px;border:0.5px solid #e0e0e0;"></div><div class="b" style="left:93.50px;top:95.00px;width:13.50px;height:6.00px;background:#fff;"></div><span class="t" style="left:95.00px;top:94.88px;font-size:5.6px;line-height:6.44px;color:#222;letter-spacing:-0.047px;">Tipo</span>
<svg class="b" style="left:93.30px;top:103.50px" width="8" height="8" viewBox="0 0 8 8"><circle cx="4" cy="4" r="3.15" fill="#fff" stroke="#444" stroke-width="0.5"/></svg>
<span class="t" style="left:102.30px;top:104.58px;font-size:5.6px;line-height:6.44px;color:#1a1a1a;letter-spacing:0.074px;">Tensione ammissibile</span>
<svg class="b" style="left:93.30px;top:115.00px" width="8" height="8" viewBox="0 0 8 8"><circle cx="4" cy="4" r="3.15" fill="#fff" stroke="#444" stroke-width="0.5"/><circle cx="4" cy="4" r="1.9" fill="#111"/></svg>
<span class="t" style="left:102.30px;top:116.08px;font-size:5.6px;line-height:6.44px;color:#1a1a1a;letter-spacing:-0.105px;">Stato limite ultimo</span>
<svg class="b" style="left:93.30px;top:126.60px" width="8" height="8" viewBox="0 0 8 8"><circle cx="4" cy="4" r="3.15" fill="#fff" stroke="#444" stroke-width="0.5"/></svg>
<span class="t" style="left:102.30px;top:127.68px;font-size:5.6px;line-height:6.44px;color:#1a1a1a;letter-spacing:-0.050px;">Momento-curvatura</span>
<div class="b" style="left:165.60px;top:98.00px;width:77.00px;height:39.30px;border:0.5px solid #e0e0e0;"></div><div class="b" style="left:167.80px;top:95.00px;width:34.00px;height:6.00px;background:#fff;"></div><span class="t" style="left:169.30px;top:94.88px;font-size:5.6px;line-height:6.44px;color:#222;letter-spacing:-0.063px;">Orientazione</span>
<span class="t" style="left:179.00px;top:105.08px;font-size:5.6px;line-height:6.44px;color:#222;">X</span>
<div class="b" style="left:189.50px;top:103.50px;width:17.50px;height:9.80px;background:#fff;border:0.5px solid #b0b0b0;"></div><span class="t" style="left:190.80px;top:105.00px;font-size:5.3999999999999995px;line-height:6.21px;color:#111;">0</span>
<div class="b" style="left:207.30px;top:103.70px;width:8.30px;height:4.70px;background:#e6e6e6;border:0.4px solid #c4c4c4;"></div><div class="b" style="left:207.30px;top:108.40px;width:8.30px;height:4.70px;background:#e6e6e6;border:0.4px solid #c4c4c4;"></div><svg class="b" style="left:209.85px;top:104.45px" width="3.2" height="3.2" viewBox="0 0 3 3"><path d="M0 2.4H3L1.5 0.4Z" fill="#111"/></svg><svg class="b" style="left:209.85px;top:109.15px" width="3.2" height="3.2" viewBox="0 0 3 3"><path d="M0 0.6H3L1.5 2.6Z" fill="#111"/></svg>
<span class="t" style="left:179.00px;top:116.33px;font-size:5.6px;line-height:6.44px;color:#222;">Y</span>
<div class="b" style="left:189.50px;top:114.75px;width:17.50px;height:9.80px;background:#fff;border:0.5px solid #b0b0b0;"></div><span class="t" style="left:190.80px;top:116.25px;font-size:5.3999999999999995px;line-height:6.21px;color:#111;">-338</span>
<div class="b" style="left:207.30px;top:114.95px;width:8.30px;height:4.70px;background:#e6e6e6;border:0.4px solid #c4c4c4;"></div><div class="b" style="left:207.30px;top:119.65px;width:8.30px;height:4.70px;background:#e6e6e6;border:0.4px solid #c4c4c4;"></div><svg class="b" style="left:209.85px;top:115.70px" width="3.2" height="3.2" viewBox="0 0 3 3"><path d="M0 2.4H3L1.5 0.4Z" fill="#111"/></svg><svg class="b" style="left:209.85px;top:120.40px" width="3.2" height="3.2" viewBox="0 0 3 3"><path d="M0 0.6H3L1.5 2.6Z" fill="#111"/></svg>
<span class="t" style="left:179.00px;top:127.58px;font-size:5.6px;line-height:6.44px;color:#222;">Z</span>
<div class="b" style="left:189.50px;top:126.00px;width:17.50px;height:9.80px;background:#fff;border:0.5px solid #b0b0b0;"></div><span class="t" style="left:190.80px;top:127.49px;font-size:5.3999999999999995px;line-height:6.21px;color:#111;">0</span>
<div class="b" style="left:207.30px;top:126.20px;width:8.30px;height:4.70px;background:#e6e6e6;border:0.4px solid #c4c4c4;"></div><div class="b" style="left:207.30px;top:130.90px;width:8.30px;height:4.70px;background:#e6e6e6;border:0.4px solid #c4c4c4;"></div><svg class="b" style="left:209.85px;top:126.95px" width="3.2" height="3.2" viewBox="0 0 3 3"><path d="M0 2.4H3L1.5 0.4Z" fill="#111"/></svg><svg class="b" style="left:209.85px;top:131.65px" width="3.2" height="3.2" viewBox="0 0 3 3"><path d="M0 0.6H3L1.5 2.6Z" fill="#111"/></svg>
<div class="b" style="left:90.50px;top:144.00px;width:152.10px;height:34.20px;border:0.5px solid #e0e0e0;"></div><div class="b" style="left:92.50px;top:141.00px;width:54.30px;height:6.00px;background:#fff;"></div><span class="t" style="left:94.00px;top:140.88px;font-size:5.6px;line-height:6.44px;color:#222;letter-spacing:0.051px;">Generazione campo</span>
<span class="t" style="left:97.00px;top:152.78px;font-size:5.6px;line-height:6.44px;color:#1a1a1a;letter-spacing:0.003px;">Posizioni asse neutro</span>
<span class="t" style="left:97.00px;top:164.08px;font-size:5.6px;line-height:6.44px;color:#1a1a1a;letter-spacing:-0.017px;">Rotazioni asse neutro</span>
<div class="b" style="left:165.00px;top:150.40px;width:28.50px;height:10.60px;background:#fff;border:0.5px solid #b0b0b0;"></div><span class="t" style="left:166.30px;top:152.29px;font-size:5.3999999999999995px;line-height:6.21px;color:#111;">20</span>
<div class="b" style="left:165.00px;top:162.00px;width:28.50px;height:11.00px;background:#fff;border:0.5px solid #b0b0b0;"></div><span class="t" style="left:166.30px;top:164.09px;font-size:5.3999999999999995px;line-height:6.21px;color:#111;">20</span>
<div class="b" style="left:197.00px;top:162.30px;width:39.70px;height:10.40px;background:#e1e1e1;border:0.5px solid #b4b4b4;"></div><span class="t" style="left:205.30px;top:164.38px;font-size:5.6px;line-height:6.44px;color:#111;letter-spacing:0.035px;">Aggiorna</span>
<div class="b" style="left:90.50px;top:185.00px;width:152.10px;height:32.20px;border:0.5px solid #e0e0e0;"></div><div class="b" style="left:92.50px;top:182.00px;width:27.30px;height:6.00px;background:#fff;"></div><span class="t" style="left:94.00px;top:181.88px;font-size:5.6px;line-height:6.44px;color:#222;letter-spacing:0.072px;">Direzione</span>
<svg class="b" style="left:95.30px;top:192.00px" width="8" height="8" viewBox="0 0 8 8"><circle cx="4" cy="4" r="3.15" fill="#fff" stroke="#c4c4c4" stroke-width="0.5"/></svg>
<span class="t" style="left:104.30px;top:192.98px;font-size:5.6px;line-height:6.44px;color:#8e8e8e;letter-spacing:-0.102px;">Direzione 1</span>
<svg class="b" style="left:95.30px;top:203.00px" width="8" height="8" viewBox="0 0 8 8"><circle cx="4" cy="4" r="3.15" fill="#fff" stroke="#c4c4c4" stroke-width="0.5"/><circle cx="4" cy="4" r="1.9" fill="#b4b4b4"/></svg>
<span class="t" style="left:104.30px;top:203.98px;font-size:5.6px;line-height:6.44px;color:#8e8e8e;letter-spacing:-0.102px;">Direzione 2</span>
<div class="b" style="left:90.50px;top:224.50px;width:152.10px;height:61.80px;border:0.5px solid #e0e0e0;"></div><div class="b" style="left:92.50px;top:221.50px;width:60.00px;height:6.00px;background:#fff;"></div><span class="t" style="left:94.00px;top:221.38px;font-size:5.6px;line-height:6.44px;color:#222;letter-spacing:0.015px;">Sollecitazione corrente</span>
<span class="t" style="left:96.50px;top:233.58px;font-size:5.6px;line-height:6.44px;color:#222;">N</span>
<div class="b" style="left:114.00px;top:231.50px;width:53.50px;height:10.60px;background:#fff;border:0.5px solid #b0b0b0;"></div><span class="t" style="left:115.00px;top:233.40px;font-size:5.3999999999999995px;line-height:6.21px;color:#111;letter-spacing:-0.079px;">-2.79e+05 N</span>
<div class="b" style="left:171.00px;top:233.10px;width:7.00px;height:7.00px;background:#fff;border:0.5px solid #777;"></div><svg class="b" style="left:171px;top:233.1px" width="7" height="7" viewBox="0 0 7 7"><path d="M1.5 3.6L2.9 5.1L5.6 1.8" fill="none" stroke="#333" stroke-width="0.75"/></svg>
<span class="t" style="left:96.50px;top:245.03px;font-size:5.6px;line-height:6.44px;color:#222;">M1</span>
<div class="b" style="left:114.00px;top:242.95px;width:53.50px;height:10.60px;background:#fff;border:0.5px solid #b0b0b0;"></div><span class="t" style="left:115.00px;top:244.84px;font-size:5.3999999999999995px;line-height:6.21px;color:#111;letter-spacing:-0.089px;">2.26e+09 Nmm</span>
<div class="b" style="left:171.00px;top:244.55px;width:7.00px;height:7.00px;background:#fff;border:0.5px solid #777;"></div><svg class="b" style="left:171px;top:244.54999999999998px" width="7" height="7" viewBox="0 0 7 7"><path d="M1.5 3.6L2.9 5.1L5.6 1.8" fill="none" stroke="#333" stroke-width="0.75"/></svg>
<span class="t" style="left:96.50px;top:256.48px;font-size:5.6px;line-height:6.44px;color:#222;">M2</span>
<div class="b" style="left:114.00px;top:254.40px;width:53.50px;height:10.60px;background:#fff;border:0.5px solid #b0b0b0;"></div><span class="t" style="left:115.00px;top:256.29px;font-size:5.3999999999999995px;line-height:6.21px;color:#111;letter-spacing:-0.089px;">2.66e+05 Nmm</span>
<div class="b" style="left:171.00px;top:256.00px;width:7.00px;height:7.00px;background:#fff;border:0.5px solid #777;"></div><svg class="b" style="left:171px;top:256.0px" width="7" height="7" viewBox="0 0 7 7"><path d="M1.5 3.6L2.9 5.1L5.6 1.8" fill="none" stroke="#333" stroke-width="0.75"/></svg>
<span class="t" style="left:96.50px;top:269.58px;font-size:5.6px;line-height:6.44px;color:#222;letter-spacing:-0.365px;">S.L.</span>
<div class="b" style="left:114.00px;top:267.50px;width:53.30px;height:10.20px;background:#e1e1e1;border:0.5px solid #adadad;"></div>
<span class="t" style="left:116.00px;top:269.18px;font-size:5.6px;line-height:6.44px;color:#222;letter-spacing:-0.145px;">Ultimo</span>
<svg class="b" style="left:160.6px;top:271px" width="4.4" height="3" viewBox="0 0 4.4 3"><path d="M0.4 0.5L2.2 2.3L4 0.5" fill="none" stroke="#555" stroke-width="0.55"/></svg>
<div class="b" style="left:184.30px;top:230.00px;width:0.60px;height:49.50px;background:#d0d0d0;"></div>
<svg class="b" style="left:189.50px;top:229.50px" width="8" height="8" viewBox="0 0 8 8"><circle cx="4" cy="4" r="3.15" fill="#fff" stroke="#444" stroke-width="0.5"/><circle cx="4" cy="4" r="1.9" fill="#111"/></svg>
<span class="t" style="left:199.00px;top:230.28px;font-size:5.6px;line-height:6.44px;color:#1a1a1a;letter-spacing:-0.077px;">N costante</span>
<svg class="b" style="left:189.50px;top:240.50px" width="8" height="8" viewBox="0 0 8 8"><circle cx="4" cy="4" r="3.15" fill="#fff" stroke="#444" stroke-width="0.5"/></svg>
<span class="t" style="left:199.00px;top:241.28px;font-size:5.6px;line-height:6.44px;color:#1a1a1a;letter-spacing:-0.137px;">M1 costante</span>
<svg class="b" style="left:189.50px;top:251.50px" width="8" height="8" viewBox="0 0 8 8"><circle cx="4" cy="4" r="3.15" fill="#fff" stroke="#444" stroke-width="0.5"/></svg>
<span class="t" style="left:199.00px;top:252.28px;font-size:5.6px;line-height:6.44px;color:#1a1a1a;letter-spacing:-0.137px;">M2 costante</span>
<div class="b" style="left:191.00px;top:268.00px;width:46.00px;height:11.00px;background:#e1e1e1;border:0.8px solid #2a7fd0;"></div><span class="t" style="left:197.00px;top:270.38px;font-size:5.6px;line-height:6.44px;color:#111;letter-spacing:0.074px;">Diagramma...</span>
<div class="b" style="left:87.00px;top:320.50px;width:31.00px;height:10.70px;background:#cfcfcf;border:0.5px solid #c0c0c0;"></div><span class="t" style="left:95.50px;top:322.73px;font-size:5.6px;line-height:6.44px;color:#9a9a9a;letter-spacing:-0.089px;">Apri...</span>
<div class="b" style="left:119.50px;top:320.50px;width:31.10px;height:10.70px;background:#e1e1e1;border:0.5px solid #b4b4b4;"></div><span class="t" style="left:126.30px;top:322.73px;font-size:5.6px;line-height:6.44px;color:#111;letter-spacing:-0.059px;">Salva...</span>
<div class="b" style="left:363.00px;top:320.50px;width:40.60px;height:10.70px;background:#e1e1e1;border:0.5px solid #b4b4b4;"></div><span class="t" style="left:375.30px;top:322.73px;font-size:5.6px;line-height:6.44px;color:#111;letter-spacing:0.021px;">Chiudi</span>
<svg class="b" style="left:404px;top:333px" width="6" height="5.5" viewBox="0 0 6 5.5"><path d="M6 0L0 5.5H6Z" fill="#c4c4c4"/></svg>
<svg class="b" style="left:254.3px;top:84.7px" width="149.3" height="228.5" viewBox="254.3 84.7 149.3 228.5"><defs>
<linearGradient id="gt" x1="284" x2="391" y1="0" y2="0" gradientUnits="userSpaceOnUse"><stop offset="0" stop-color="#ff0000"/><stop offset="0.028" stop-color="#f40000"/><stop offset="0.04" stop-color="#bc0000"/><stop offset="0.3" stop-color="#b00000"/><stop offset="0.45" stop-color="#9c0000"/><stop offset="0.6" stop-color="#7e0000"/><stop offset="1" stop-color="#720000"/></linearGradient>
<linearGradient id="gb" x1="284" x2="391" y1="0" y2="0" gradientUnits="userSpaceOnUse"><stop offset="0" stop-color="#ff0000"/><stop offset="0.028" stop-color="#fa0000"/><stop offset="0.04" stop-color="#d60000"/><stop offset="0.3" stop-color="#cc0000"/><stop offset="0.47" stop-color="#c40000"/><stop offset="0.56" stop-color="#a80000"/><stop offset="0.8" stop-color="#9a0000"/><stop offset="1" stop-color="#920000"/></linearGradient>
<clipPath id="cl"><path d="M284.4 199.2V162C284.63 161.33 284.72 160.12 285.80 158.00C286.88 155.88 289.15 152.13 290.90 149.30C292.65 146.47 294.37 143.88 296.30 141.00C298.23 138.12 300.32 134.85 302.50 132.00C304.68 129.15 307.02 126.63 309.40 123.90C311.78 121.17 314.53 117.87 316.80 115.60C319.07 113.33 321.22 111.65 323.00 110.30C324.78 108.95 326.00 108.23 327.50 107.50C329.00 106.77 330.50 106.12 332.00 105.90C333.50 105.68 335.00 105.92 336.50 106.20C338.00 106.48 339.58 106.93 341.00 107.60C342.42 108.27 343.70 109.23 345.00 110.20C346.30 111.17 347.30 111.85 348.80 113.40C350.30 114.95 352.25 117.32 354.00 119.50C355.75 121.68 357.55 123.92 359.30 126.50C361.05 129.08 362.75 131.93 364.50 135.00C366.25 138.07 368.05 141.40 369.80 144.90C371.55 148.40 373.25 152.07 375.00 156.00C376.75 159.93 378.72 164.67 380.30 168.50C381.88 172.33 383.18 175.50 384.50 179.00C385.82 182.50 387.15 186.13 388.20 189.50C389.25 192.87 390.37 197.58 390.80 199.20Z"/><path d="M284.4 199.2V234.4C284.63 235.05 284.70 235.95 285.80 238.30C286.90 240.65 289.25 245.22 291.00 248.50C292.75 251.78 294.38 254.83 296.30 258.00C298.22 261.17 300.32 264.43 302.50 267.50C304.68 270.57 307.15 273.82 309.40 276.40C311.65 278.98 313.82 281.03 316.00 283.00C318.18 284.97 320.50 286.87 322.50 288.20C324.50 289.53 326.25 290.32 328.00 291.00C329.75 291.68 331.50 292.10 333.00 292.30C334.50 292.50 335.68 292.43 337.00 292.20C338.32 291.97 339.57 291.50 340.90 290.90C342.23 290.30 343.68 289.48 345.00 288.60C346.32 287.72 347.22 287.20 348.80 285.60C350.38 284.00 352.53 281.40 354.50 279.00C356.47 276.60 358.85 273.95 360.60 271.20C362.35 268.45 363.47 265.57 365.00 262.50C366.53 259.43 368.13 256.30 369.80 252.80C371.47 249.30 373.25 245.47 375.00 241.50C376.75 237.53 378.72 232.83 380.30 229.00C381.88 225.17 383.18 222.00 384.50 218.50C385.82 215.00 387.15 211.22 388.20 208.00C389.25 204.78 390.37 200.67 390.80 199.20Z"/></clipPath>
</defs><rect x="254.3" y="84.7" width="149.3" height="228.5" fill="#000"/><path d="M284.4 199.2V162C284.63 161.33 284.72 160.12 285.80 158.00C286.88 155.88 289.15 152.13 290.90 149.30C292.65 146.47 294.37 143.88 296.30 141.00C298.23 138.12 300.32 134.85 302.50 132.00C304.68 129.15 307.02 126.63 309.40 123.90C311.78 121.17 314.53 117.87 316.80 115.60C319.07 113.33 321.22 111.65 323.00 110.30C324.78 108.95 326.00 108.23 327.50 107.50C329.00 106.77 330.50 106.12 332.00 105.90C333.50 105.68 335.00 105.92 336.50 106.20C338.00 106.48 339.58 106.93 341.00 107.60C342.42 108.27 343.70 109.23 345.00 110.20C346.30 111.17 347.30 111.85 348.80 113.40C350.30 114.95 352.25 117.32 354.00 119.50C355.75 121.68 357.55 123.92 359.30 126.50C361.05 129.08 362.75 131.93 364.50 135.00C366.25 138.07 368.05 141.40 369.80 144.90C371.55 148.40 373.25 152.07 375.00 156.00C376.75 159.93 378.72 164.67 380.30 168.50C381.88 172.33 383.18 175.50 384.50 179.00C385.82 182.50 387.15 186.13 388.20 189.50C389.25 192.87 390.37 197.58 390.80 199.20Z" fill="url(#gt)"/><path d="M284.4 199.2V234.4C284.63 235.05 284.70 235.95 285.80 238.30C286.90 240.65 289.25 245.22 291.00 248.50C292.75 251.78 294.38 254.83 296.30 258.00C298.22 261.17 300.32 264.43 302.50 267.50C304.68 270.57 307.15 273.82 309.40 276.40C311.65 278.98 313.82 281.03 316.00 283.00C318.18 284.97 320.50 286.87 322.50 288.20C324.50 289.53 326.25 290.32 328.00 291.00C329.75 291.68 331.50 292.10 333.00 292.30C334.50 292.50 335.68 292.43 337.00 292.20C338.32 291.97 339.57 291.50 340.90 290.90C342.23 290.30 343.68 289.48 345.00 288.60C346.32 287.72 347.22 287.20 348.80 285.60C350.38 284.00 352.53 281.40 354.50 279.00C356.47 276.60 358.85 273.95 360.60 271.20C362.35 268.45 363.47 265.57 365.00 262.50C366.53 259.43 368.13 256.30 369.80 252.80C371.47 249.30 373.25 245.47 375.00 241.50C376.75 237.53 378.72 232.83 380.30 229.00C381.88 225.17 383.18 222.00 384.50 218.50C385.82 215.00 387.15 211.22 388.20 208.00C389.25 204.78 390.37 200.67 390.80 199.20Z" fill="url(#gb)"/><g clip-path="url(#cl)"><path d="M338 199.2L322.2 70.2L333.5 69.3Z" fill="#300000" opacity="0.055"/><path d="M338 199.2L347.1 69.5L356.1 70.5Z" fill="#ff3030" opacity="0.039"/><path d="M338 199.2L378.2 75.6L388.8 79.5Z" fill="#ff2020" opacity="0.044"/><path d="M338 199.2L406.9 89.0L414.4 94.0Z" fill="#300000" opacity="0.033"/><path d="M338 199.2L429.9 107.3L437.6 115.6Z" fill="#ff2020" opacity="0.028"/><path d="M338 199.2L324.4 328.5L313.2 326.8Z" fill="#ff4040" opacity="0.044"/><path d="M338 199.2L351.6 328.5L342.5 329.1Z" fill="#500000" opacity="0.055"/><path d="M338 199.2L378.2 322.8L367.2 325.9Z" fill="#ff3030" opacity="0.044"/><path d="M338 199.2L403.0 311.8L395.0 316.0Z" fill="#400000" opacity="0.050"/><path d="M338 199.2L425.0 295.8L416.2 303.0Z" fill="#ff3030" opacity="0.039"/><path d="M338 199.2L443.2 275.6L437.6 282.8Z" fill="#400000" opacity="0.039"/><path d="M338 199.2L456.8 252.1L451.7 262.2Z" fill="#ff3030" opacity="0.028"/></g><path d="M284.4 199.2V162C284.63 161.33 284.72 160.12 285.80 158.00C286.88 155.88 289.15 152.13 290.90 149.30C292.65 146.47 294.37 143.88 296.30 141.00C298.23 138.12 300.32 134.85 302.50 132.00C304.68 129.15 307.02 126.63 309.40 123.90C311.78 121.17 314.53 117.87 316.80 115.60C319.07 113.33 321.22 111.65 323.00 110.30C324.78 108.95 326.00 108.23 327.50 107.50C329.00 106.77 330.50 106.12 332.00 105.90C333.50 105.68 335.00 105.92 336.50 106.20C338.00 106.48 339.58 106.93 341.00 107.60C342.42 108.27 343.70 109.23 345.00 110.20C346.30 111.17 347.30 111.85 348.80 113.40C350.30 114.95 352.25 117.32 354.00 119.50C355.75 121.68 357.55 123.92 359.30 126.50C361.05 129.08 362.75 131.93 364.50 135.00C366.25 138.07 368.05 141.40 369.80 144.90C371.55 148.40 373.25 152.07 375.00 156.00C376.75 159.93 378.72 164.67 380.30 168.50C381.88 172.33 383.18 175.50 384.50 179.00C385.82 182.50 387.15 186.13 388.20 189.50C389.25 192.87 390.37 197.58 390.80 199.20" fill="none" stroke="#f6dede" stroke-width="0.6"/><path d="M284.4 199.2V234.4C284.63 235.05 284.70 235.95 285.80 238.30C286.90 240.65 289.25 245.22 291.00 248.50C292.75 251.78 294.38 254.83 296.30 258.00C298.22 261.17 300.32 264.43 302.50 267.50C304.68 270.57 307.15 273.82 309.40 276.40C311.65 278.98 313.82 281.03 316.00 283.00C318.18 284.97 320.50 286.87 322.50 288.20C324.50 289.53 326.25 290.32 328.00 291.00C329.75 291.68 331.50 292.10 333.00 292.30C334.50 292.50 335.68 292.43 337.00 292.20C338.32 291.97 339.57 291.50 340.90 290.90C342.23 290.30 343.68 289.48 345.00 288.60C346.32 287.72 347.22 287.20 348.80 285.60C350.38 284.00 352.53 281.40 354.50 279.00C356.47 276.60 358.85 273.95 360.60 271.20C362.35 268.45 363.47 265.57 365.00 262.50C366.53 259.43 368.13 256.30 369.80 252.80C371.47 249.30 373.25 245.47 375.00 241.50C376.75 237.53 378.72 232.83 380.30 229.00C381.88 225.17 383.18 222.00 384.50 218.50C385.82 215.00 387.15 211.22 388.20 208.00C389.25 204.78 390.37 200.67 390.80 199.20" fill="none" stroke="#f6dede" stroke-width="0.6"/><path d="M285.2 161.5C286.08 160.17 288.70 156.08 290.50 153.50C292.30 150.92 294.00 148.48 296.00 146.00C298.00 143.52 300.27 140.97 302.50 138.60C304.73 136.23 307.15 133.83 309.40 131.80C311.65 129.77 313.82 127.93 316.00 126.40C318.18 124.87 320.33 123.57 322.50 122.60C324.67 121.63 326.82 121.03 329.00 120.60C331.18 120.17 333.60 120.00 335.60 120.00C337.60 120.00 339.27 120.30 341.00 120.60C342.73 120.90 344.25 121.18 346.00 121.80C347.75 122.42 349.72 123.30 351.50 124.30C353.28 125.30 355.05 126.60 356.70 127.80C358.35 129.00 360.62 130.88 361.40 131.50" fill="none" stroke="#f0c8c8" stroke-width="0.55"/><path d="M285.2 236C286.08 237.58 288.65 242.50 290.50 245.50C292.35 248.50 294.30 251.28 296.30 254.00C298.30 256.72 300.32 259.38 302.50 261.80C304.68 264.22 307.15 266.60 309.40 268.50C311.65 270.40 313.82 271.88 316.00 273.20C318.18 274.52 320.33 275.53 322.50 276.40C324.67 277.27 326.82 277.97 329.00 278.40C331.18 278.83 333.60 279.00 335.60 279.00C337.60 279.00 339.27 278.73 341.00 278.40C342.73 278.07 344.25 277.63 346.00 277.00C347.75 276.37 349.72 275.60 351.50 274.60C353.28 273.60 355.15 272.18 356.70 271.00C358.25 269.82 360.12 268.08 360.80 267.50" fill="none" stroke="#f0c8c8" stroke-width="0.55"/><path d="M286.4 158.1C287.25 156.68 289.75 152.38 291.50 149.63C293.25 146.88 294.97 144.38 296.90 141.59C298.83 138.80 300.92 135.63 303.10 132.89C305.28 130.14 307.62 127.74 310.00 125.12C312.38 122.50 315.13 119.33 317.40 117.17C319.67 115.02 321.82 113.44 323.60 112.17C325.38 110.91 326.80 110.25 328.10 109.59C329.40 108.93 330.10 108.39 331.40 108.20C332.70 108.02 334.40 108.24 335.90 108.48C337.40 108.72 338.98 109.07 340.40 109.66C341.82 110.26 343.10 111.17 344.40 112.07C345.70 112.98 346.70 113.61 348.20 115.09C349.70 116.57 351.65 118.84 353.40 120.94C355.15 123.04 357.82 126.56 358.70 127.69" fill="none" stroke="#f0bcbc" stroke-width="0.45"/><path d="M286.4 238.2C287.27 239.87 289.85 244.96 291.60 248.16C293.35 251.36 294.98 254.33 296.90 257.41C298.82 260.48 300.92 263.65 303.10 266.61C305.28 269.57 307.75 272.71 310.00 275.18C312.25 277.66 314.42 279.60 316.60 281.46C318.78 283.33 321.10 285.11 323.10 286.35C325.10 287.59 327.05 288.29 328.60 288.89C330.15 289.49 331.10 289.77 332.40 289.95C333.70 290.12 335.08 290.13 336.40 289.94C337.72 289.76 338.97 289.37 340.30 288.83C341.63 288.30 343.08 287.55 344.40 286.73C345.72 285.91 346.62 285.43 348.20 283.91C349.78 282.39 351.93 279.89 353.90 277.58C355.87 275.28 358.98 271.33 360.00 270.08" fill="none" stroke="#f0bcbc" stroke-width="0.45"/><path d="M287.2 162.5V235" stroke="#ff5a5a" stroke-width="0.5"/><path d="M254.3 199.2H284.4" stroke="#1414c0" stroke-width="0.7"/><path d="M284.4 199.2H403.6" stroke="#f0dcdc" stroke-width="0.6"/><path d="M360.6 88V128.2M360.6 271.5V308.5" stroke="#e0e0e0" stroke-width="0.6"/><path d="M356.6 101.5V122.8" stroke="#d0d0d0" stroke-width="0.5"/><text x="360" y="88" font-size="4.6" fill="#ddd" font-family="Liberation Sans,sans-serif">M1</text><text x="355.8" y="101" font-size="4.5" fill="#ddd" font-family="Liberation Sans,sans-serif">Corrente</text><text x="360" y="312" font-size="4.6" fill="#ddd" font-family="Liberation Sans,sans-serif">M1</text><text x="254.8" y="200.8" font-size="4.4" fill="#8a8af0" font-family="Liberation Sans,sans-serif">-N</text></svg>
<div class="b" style="left:409.30px;top:62.30px;width:251.00px;height:217.90px;background:#f0f0f0;border:0.5px solid #7ab2e8;box-shadow:0 1px 6px rgba(0,0,0,0.4);"></div>
<div class="b" style="left:409.90px;top:62.90px;width:249.80px;height:15.30px;background:#fff;"></div>
<span class="t" style="left:414.30px;top:67.22px;font-size:6.4px;line-height:7.36px;color:#2a2a2a;letter-spacing:-0.120px;">Diagramma</span>
<svg class="b" style="left:648.80px;top:67.80px" width="5.4" height="5.4" viewBox="0 0 5 5"><path d="M0.4 0.4L4.6 4.6M4.6 0.4L0.4 4.6" stroke="#222" stroke-width="0.6"/></svg>
<div class="b" style="left:414.20px;top:91.50px;width:242.00px;height:168.80px;background:#fff;border:0.5px solid #d8d8d8;"></div>
<div class="b" style="left:414.20px;top:81.60px;width:81.10px;height:10.60px;background:#fff;border:0.5px solid #d8d8d8;border-bottom:none;"></div>
<span class="t" style="left:416.30px;top:83.39px;font-size:5.4px;line-height:6.21px;color:#222;letter-spacing:-0.049px;">Diagramma campo di resistenza</span>
<div class="b" style="left:420.00px;top:98.50px;width:230.30px;height:137.30px;background:#fff;border:0.6px solid #9a9a9a;border-right-color:#e4e4e4;border-bottom-color:#e4e4e4;"></div>
<svg class="b" style="left:420px;top:98px" width="240" height="140" viewBox="420 98 240 140"><rect x="448.4" y="106.2" width="187" height="118.2" fill="#c0c0c0" stroke="#555" stroke-width="0.6"/><path d="M448.4 165.1H635.4M541.5 106.2V224.4" stroke="#222" stroke-width="0.5"/><path d="M478.80 163.5V166.7M510.15 163.5V166.7M572.85 163.5V166.7M604.20 163.5V166.7M540.0 219.35H543.0M540.0 211.60H543.0M540.0 203.85H543.0M540.0 196.10H543.0M540.0 188.35H543.0M540.0 180.60H543.0M540.0 172.85H543.0M540.0 157.35H543.0M540.0 149.60H543.0M540.0 141.85H543.0M540.0 134.10H543.0M540.0 126.35H543.0M540.0 118.60H543.0M540.0 110.85H543.0" stroke="#222" stroke-width="0.5"/><path d="M541.5 111.2L535.0 113.0L514.8 120.5L481.4 136.4L477.5 138.4L467.5 143.7L466.7 145.0L460.0 156.0L457.5 160.0L456.7 165.1L457.5 170.9L460.4 175.0L464.7 182.2L467.5 186.4L475.9 191.2L477.2 191.4L507.3 207.2L514.8 210.0L527.6 215.0L541.5 218.8L544.0 218.4L555.4 215.0L568.7 209.7L576.4 207.2L606.8 191.2L616.0 186.2L618.5 182.2L623.5 174.7L625.5 170.9L626.8 165.8L626.5 162.6L624.3 156.8L621.8 153.4L616.8 145.0L616.0 143.0L606.4 138.0L602.0 136.0L568.7 120.5L548.0 113.0L541.5 111.2Z" fill="none" stroke="#d85050" stroke-width="0.55"/><circle cx="541.5" cy="111.2" r="0.75" fill="#2020e0"/><circle cx="535.0" cy="113.0" r="0.75" fill="#2020e0"/><circle cx="514.8" cy="120.5" r="0.75" fill="#2020e0"/><circle cx="481.4" cy="136.4" r="0.75" fill="#2020e0"/><circle cx="477.5" cy="138.4" r="0.75" fill="#2020e0"/><circle cx="467.5" cy="143.7" r="0.75" fill="#2020e0"/><circle cx="466.7" cy="145.0" r="0.75" fill="#2020e0"/><circle cx="460.0" cy="156.0" r="0.75" fill="#2020e0"/><circle cx="457.5" cy="160.0" r="0.75" fill="#2020e0"/><circle cx="456.7" cy="165.1" r="0.75" fill="#2020e0"/><circle cx="457.5" cy="170.9" r="0.75" fill="#2020e0"/><circle cx="460.4" cy="175.0" r="0.75" fill="#2020e0"/><circle cx="464.7" cy="182.2" r="0.75" fill="#2020e0"/><circle cx="467.5" cy="186.4" r="0.75" fill="#2020e0"/><circle cx="475.9" cy="191.2" r="0.75" fill="#2020e0"/><circle cx="477.2" cy="191.4" r="0.75" fill="#2020e0"/><circle cx="507.3" cy="207.2" r="0.75" fill="#2020e0"/><circle cx="514.8" cy="210.0" r="0.75" fill="#2020e0"/><circle cx="527.6" cy="215.0" r="0.75" fill="#2020e0"/><circle cx="541.5" cy="218.8" r="0.75" fill="#2020e0"/><circle cx="544.0" cy="218.4" r="0.75" fill="#2020e0"/><circle cx="555.4" cy="215.0" r="0.75" fill="#2020e0"/><circle cx="568.7" cy="209.7" r="0.75" fill="#2020e0"/><circle cx="576.4" cy="207.2" r="0.75" fill="#2020e0"/><circle cx="606.8" cy="191.2" r="0.75" fill="#2020e0"/><circle cx="616.0" cy="186.2" r="0.75" fill="#2020e0"/><circle cx="618.5" cy="182.2" r="0.75" fill="#2020e0"/><circle cx="623.5" cy="174.7" r="0.75" fill="#2020e0"/><circle cx="625.5" cy="170.9" r="0.75" fill="#2020e0"/><circle cx="626.8" cy="165.8" r="0.75" fill="#2020e0"/><circle cx="626.5" cy="162.6" r="0.75" fill="#2020e0"/><circle cx="624.3" cy="156.8" r="0.75" fill="#2020e0"/><circle cx="621.8" cy="153.4" r="0.75" fill="#2020e0"/><circle cx="616.8" cy="145.0" r="0.75" fill="#2020e0"/><circle cx="616.0" cy="143.0" r="0.75" fill="#2020e0"/><circle cx="606.4" cy="138.0" r="0.75" fill="#2020e0"/><circle cx="602.0" cy="136.0" r="0.75" fill="#2020e0"/><circle cx="568.7" cy="120.5" r="0.75" fill="#2020e0"/><circle cx="548.0" cy="113.0" r="0.75" fill="#2020e0"/><circle cx="612.4" cy="165.1" r="0.8" fill="#e02020"/></svg>
<span class="t" style="left:423.95px;top:115.85px;font-size:5.3px;line-height:6.09px;color:#111;">3.00e+08</span>
<span class="t" style="left:423.95px;top:131.35px;font-size:5.3px;line-height:6.09px;color:#111;">2.00e+08</span>
<span class="t" style="left:423.95px;top:146.85px;font-size:5.3px;line-height:6.09px;color:#111;">1.00e+08</span>
<span class="t" style="left:435.88px;top:162.35px;font-size:5.3px;line-height:6.09px;color:#111;">0.00</span>
<span class="t" style="left:422.18px;top:177.85px;font-size:5.3px;line-height:6.09px;color:#111;">-1.00e+08</span>
<span class="t" style="left:422.18px;top:193.35px;font-size:5.3px;line-height:6.09px;color:#111;">-2.00e+08</span>
<span class="t" style="left:422.18px;top:208.85px;font-size:5.3px;line-height:6.09px;color:#111;">-3.00e+08</span>
<span class="t" style="left:466.09px;top:228.35px;font-size:5.3px;line-height:6.09px;color:#111;">-2.00e+09</span>
<span class="t" style="left:536.34px;top:228.35px;font-size:5.3px;line-height:6.09px;color:#111;">0.00</span>
<span class="t" style="left:593.07px;top:228.35px;font-size:5.3px;line-height:6.09px;color:#111;">2.00e+09</span>
<span class="t" style="left:613.60px;top:158.57px;font-size:5.1px;line-height:5.86px;color:#111;letter-spacing:0.199px;">M1 = 2.26e+09</span>
<span class="t" style="left:613.60px;top:164.77px;font-size:5.1px;line-height:5.86px;color:#111;letter-spacing:0.199px;">M2 = 2.66e+05</span>
<div class="b" style="left:603.50px;top:103.40px;width:42.10px;height:11.20px;background:#fff;border:0.6px solid #444;"></div>
<span class="t" style="left:607.30px;top:106.05px;font-size:5.3px;line-height:6.09px;color:#111;letter-spacing:0.047px;">N = -2.79e+05</span>
<div class="b" style="left:603.00px;top:242.00px;width:47.60px;height:11.80px;background:#e1e1e1;border:0.8px solid #2a7fd0;"></div><span class="t" style="left:609.00px;top:244.78px;font-size:5.6px;line-height:6.44px;color:#111;letter-spacing:-0.054px;">Impostazioni...</span>
<div class="b" style="left:542.30px;top:265.50px;width:35.50px;height:10.80px;background:#e1e1e1;border:0.5px solid #b4b4b4;"></div><span class="t" style="left:556.30px;top:267.78px;font-size:5.6px;line-height:6.44px;color:#111;letter-spacing:-0.396px;">OK</span>
<div class="b" style="left:582.00px;top:265.50px;width:35.60px;height:10.80px;background:#e1e1e1;border:0.5px solid #b4b4b4;"></div><span class="t" style="left:591.00px;top:267.78px;font-size:5.6px;line-height:6.44px;color:#111;letter-spacing:-0.155px;">Annulla</span>
<div class="b" style="left:621.60px;top:265.50px;width:35.40px;height:10.80px;background:#e1e1e1;border:0.5px solid #b4b4b4;"></div><span class="t" style="left:638.00px;top:267.78px;font-size:5.6px;line-height:6.44px;color:#111;">?</span>
</body></html>
